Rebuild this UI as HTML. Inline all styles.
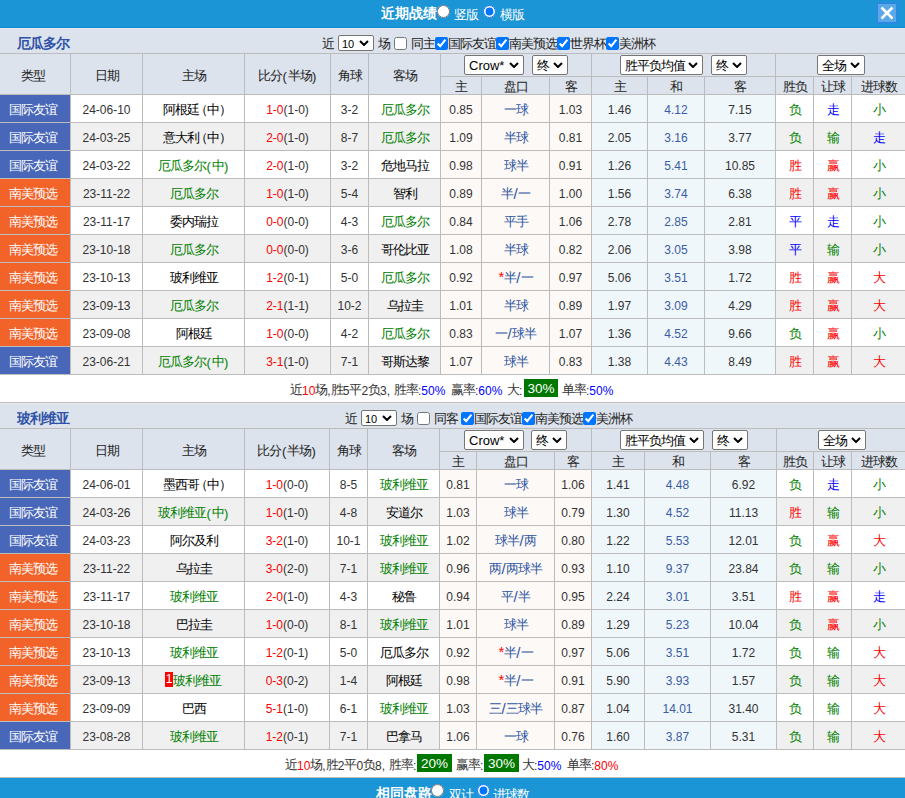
<!DOCTYPE html>
<html><head><meta charset="utf-8"><title>近期战绩</title><style>
html,body{margin:0;padding:0;}
body{width:905px;height:798px;overflow:hidden;position:relative;background:#fff;font-family:"Liberation Sans",sans-serif;font-size:12px;color:#333;}
body>div,body>select,body>input{position:absolute;box-sizing:border-box;}
.t{text-align:center;white-space:nowrap;overflow:hidden;}
.o{color:#222;font-size:12px;line-height:14px;white-space:nowrap;}
.s{margin:0;padding:0 0 0 2px;font-family:"Liberation Sans",sans-serif;font-size:13px;color:#000;background:#fff;border:1px solid #767676;border-radius:3px;}
.c{margin:0;width:13px;height:13px;}
.k{font-size:13px;letter-spacing:-1px;position:relative;top:-1px;font-weight:500;}
.ast{color:#f00;font-size:15px;line-height:0;position:relative;top:-1px;}
.sl{font-size:15px;line-height:0;}
.pl{margin-left:-3.5px;}
.pr{margin-right:-6.5px;}
.pa{font-size:13px;margin:0 0.6px;}
.k2{font-size:13px;letter-spacing:-1px;font-weight:500;}
.sel{background:#fff;border:1px solid #767676;border-radius:2px;color:#000;}
.r{margin:0;width:13px;height:13px;}
.tt{color:#fff;font-weight:bold;font-size:14px;white-space:nowrap;}
.tw{color:#fff;font-size:13px;letter-spacing:-1px;white-space:nowrap;}
.gb{background:#007800;color:#fff;text-align:center;line-height:18px;height:18px;font-size:13.5px;}
.sm{white-space:nowrap;line-height:14px;font-size:12px;}
.red1{display:inline-block;background:#f00;color:#fff;width:8px;height:15px;line-height:15px;font-size:12px;vertical-align:top;position:relative;top:4px;text-align:center;margin-left:-1px;}
</style></head>
<body>
<div style="left:0px;top:0px;width:905px;height:27px;background:#1b95d6;"></div>
<div style="left:0px;top:27px;width:905px;height:1px;background:#0e8bd1;"></div>
<div class="tt" style="left:381px;top:0px;height:27px;line-height:27px">近期战绩</div>
<input type="radio" class="r" name="v" style="left:437px;top:5px">
<div class="tw" style="left:454px;top:1px;height:27px;line-height:27px">竖版</div>
<input type="radio" class="r" name="v" checked style="left:483px;top:5px">
<div class="tw" style="left:500px;top:1px;height:27px;line-height:27px">横版</div>
<div style="left:876px;top:2px;width:22px;height:22px;border:2px solid #2a89e0;background:#5aa8e8"></div>
<svg style="position:absolute;left:876px;top:2px" width="22" height="22" viewBox="0 0 22 22"><path d="M5.5 5.5 L16.5 16.5 M16.5 5.5 L5.5 16.5" stroke="#fff" stroke-width="2.5" stroke-linecap="butt"/></svg>
<div style="left:0px;top:28px;width:905px;height:1px;background:#e6e9ee;"></div>
<div style="left:0px;top:29px;width:905px;height:24px;background:#dce3ec;"></div>
<div style="left:0px;top:53px;width:905px;height:1px;background:#bcbcbc;"></div>
<div class="t" style="left:17px;top:31px;width:80px;height:24px;line-height:24px;color:#2f52a8;font-weight:bold;font-size:14px;letter-spacing:-1px;text-align:left">厄瓜多尔</div>
<div class="o" style="left:322px;top:38px"><span class="k">近</span></div>
<div class="sel" style="left:338px;top:35px;width:36px;height:16px"><span style="position:absolute;left:3px;top:1px;line-height:14px;font-size:11px">10</span><svg style="position:absolute;left:20px;top:4px" width="10" height="6" viewBox="0 0 10 6"><path d="M1 1 L5 5 L9 1" fill="none" stroke="#000" stroke-width="2"/></svg></div>
<div class="o" style="left:378px;top:38px"><span class="k">场</span></div>
<input type="checkbox" class="c" style="left:394px;top:37px">
<div class="o" style="left:411px;top:38px"><span class="k">同主</span></div>
<input type="checkbox" class="c" checked style="left:435px;top:37px">
<div class="o" style="left:448px;top:38px"><span class="k">国际友谊</span></div>
<input type="checkbox" class="c" checked style="left:496px;top:37px">
<div class="o" style="left:509px;top:38px"><span class="k">南美预选</span></div>
<input type="checkbox" class="c" checked style="left:557px;top:37px">
<div class="o" style="left:570px;top:38px"><span class="k">世界杯</span></div>
<input type="checkbox" class="c" checked style="left:606px;top:37px">
<div class="o" style="left:619px;top:38px"><span class="k">美洲杯</span></div>
<div style="left:0px;top:54px;width:905px;height:40px;background:#dce3ec;"></div>
<div style="left:441px;top:76px;width:464px;height:1px;background:#bcbcbc;"></div>
<div style="left:0px;top:94px;width:905px;height:1px;background:#bcbcbc;"></div>
<div style="left:70px;top:54px;width:1px;height:40px;background:#bcbcbc;"></div>
<div style="left:142px;top:54px;width:1px;height:40px;background:#bcbcbc;"></div>
<div style="left:244px;top:54px;width:1px;height:40px;background:#bcbcbc;"></div>
<div style="left:330px;top:54px;width:1px;height:40px;background:#bcbcbc;"></div>
<div style="left:368px;top:54px;width:1px;height:40px;background:#bcbcbc;"></div>
<div style="left:440px;top:54px;width:1px;height:40px;background:#bcbcbc;"></div>
<div style="left:440px;top:54px;width:1px;height:22px;background:#bcbcbc;"></div>
<div style="left:591px;top:54px;width:1px;height:22px;background:#bcbcbc;"></div>
<div style="left:775px;top:54px;width:1px;height:22px;background:#bcbcbc;"></div>
<div style="left:440px;top:77px;width:1px;height:17px;background:#bcbcbc;"></div>
<div style="left:481px;top:77px;width:1px;height:17px;background:#bcbcbc;"></div>
<div style="left:549px;top:77px;width:1px;height:17px;background:#bcbcbc;"></div>
<div style="left:591px;top:77px;width:1px;height:17px;background:#bcbcbc;"></div>
<div style="left:647px;top:77px;width:1px;height:17px;background:#bcbcbc;"></div>
<div style="left:704px;top:77px;width:1px;height:17px;background:#bcbcbc;"></div>
<div style="left:775px;top:77px;width:1px;height:17px;background:#bcbcbc;"></div>
<div style="left:813px;top:77px;width:1px;height:17px;background:#bcbcbc;"></div>
<div style="left:851px;top:77px;width:1px;height:17px;background:#bcbcbc;"></div>
<div class="t" style="left:-2px;top:57px;width:70px;height:40px;line-height:40px;color:#222"><span class="k">类型</span></div>
<div class="t" style="left:71px;top:57px;width:71px;height:40px;line-height:40px;color:#222"><span class="k">日期</span></div>
<div class="t" style="left:143px;top:57px;width:101px;height:40px;line-height:40px;color:#222"><span class="k">主场</span></div>
<div class="t" style="left:245px;top:57px;width:85px;height:40px;line-height:40px;color:#222"><span class="k">比分</span><span class="pa">(</span><span class="k">半场</span><span class="pa">)</span></div>
<div class="t" style="left:331px;top:57px;width:37px;height:40px;line-height:40px;color:#222"><span class="k">角球</span></div>
<div class="t" style="left:369px;top:57px;width:71px;height:40px;line-height:40px;color:#222"><span class="k">客场</span></div>
<div class="t" style="left:441px;top:79px;width:40px;height:17px;line-height:17px;color:#222"><span class="k">主</span></div>
<div class="t" style="left:482px;top:79px;width:67px;height:17px;line-height:17px;color:#222"><span class="k">盘口</span></div>
<div class="t" style="left:550px;top:79px;width:41px;height:17px;line-height:17px;color:#222"><span class="k">客</span></div>
<div class="t" style="left:592px;top:79px;width:55px;height:17px;line-height:17px;color:#222"><span class="k">主</span></div>
<div class="t" style="left:648px;top:79px;width:56px;height:17px;line-height:17px;color:#222"><span class="k">和</span></div>
<div class="t" style="left:705px;top:79px;width:70px;height:17px;line-height:17px;color:#222"><span class="k">客</span></div>
<div class="t" style="left:776px;top:79px;width:37px;height:17px;line-height:17px;color:#222"><span class="k">胜负</span></div>
<div class="t" style="left:814px;top:79px;width:37px;height:17px;line-height:17px;color:#222"><span class="k">让球</span></div>
<div class="t" style="left:852px;top:79px;width:53px;height:17px;line-height:17px;color:#222"><span class="k">进球数</span></div>
<div class="sel" style="left:464px;top:55px;width:60px;height:20px"><span style="position:absolute;left:4px;top:1px;line-height:18px;font-size:13px">Crow*</span><svg style="position:absolute;left:44px;top:6px" width="10" height="6" viewBox="0 0 10 6"><path d="M1 1 L5 5 L9 1" fill="none" stroke="#000" stroke-width="2"/></svg></div>
<div class="sel" style="left:532px;top:55px;width:36px;height:20px"><span style="position:absolute;left:4px;top:1px;line-height:18px;font-size:13px"><span class="k2">终</span></span><svg style="position:absolute;left:20px;top:6px" width="10" height="6" viewBox="0 0 10 6"><path d="M1 1 L5 5 L9 1" fill="none" stroke="#000" stroke-width="2"/></svg></div>
<div class="sel" style="left:620px;top:55px;width:83px;height:20px"><span style="position:absolute;left:4px;top:1px;line-height:18px;font-size:13px"><span class="k2">胜平负均值</span></span><svg style="position:absolute;left:67px;top:6px" width="10" height="6" viewBox="0 0 10 6"><path d="M1 1 L5 5 L9 1" fill="none" stroke="#000" stroke-width="2"/></svg></div>
<div class="sel" style="left:711px;top:55px;width:36px;height:20px"><span style="position:absolute;left:4px;top:1px;line-height:18px;font-size:13px"><span class="k2">终</span></span><svg style="position:absolute;left:20px;top:6px" width="10" height="6" viewBox="0 0 10 6"><path d="M1 1 L5 5 L9 1" fill="none" stroke="#000" stroke-width="2"/></svg></div>
<div class="sel" style="left:817px;top:55px;width:48px;height:20px"><span style="position:absolute;left:4px;top:1px;line-height:18px;font-size:13px"><span class="k2">全场</span></span><svg style="position:absolute;left:32px;top:6px" width="10" height="6" viewBox="0 0 10 6"><path d="M1 1 L5 5 L9 1" fill="none" stroke="#000" stroke-width="2"/></svg></div>
<div style="left:0px;top:95px;width:70px;height:27px;background:#4867b8;"></div>
<div class="t" style="left:-2px;top:97px;width:70px;height:27px;line-height:27px;"><span style="color:#fff"><span class="k">国际友谊</span></span></div>
<div style="left:71px;top:95px;width:71px;height:27px;background:#ffffff;"></div>
<div class="t" style="left:71px;top:97px;width:71px;height:27px;line-height:27px;"><span style="color:#333333">24-06-10</span></div>
<div style="left:143px;top:95px;width:101px;height:27px;background:#ffffff;"></div>
<div class="t" style="left:143px;top:97px;width:101px;height:27px;line-height:27px;"><span style="color:#000"><span class="k">阿根廷<span class="pl">（</span>中<span class="pr">）</span></span></span></div>
<div style="left:245px;top:95px;width:85px;height:27px;background:#ffffff;"></div>
<div class="t" style="left:245px;top:97px;width:85px;height:27px;line-height:27px;"><span style="color:#ff0000">1-0</span><span style="color:#333333">(1-0)</span></div>
<div style="left:331px;top:95px;width:37px;height:27px;background:#ffffff;"></div>
<div class="t" style="left:331px;top:97px;width:37px;height:27px;line-height:27px;"><span style="color:#333333">3-2</span></div>
<div style="left:369px;top:95px;width:71px;height:27px;background:#ffffff;"></div>
<div class="t" style="left:369px;top:97px;width:71px;height:27px;line-height:27px;"><span style="color:#008000"><span class="k">厄瓜多尔</span></span></div>
<div style="left:441px;top:95px;width:40px;height:27px;background:#fdf9f6;"></div>
<div class="t" style="left:441px;top:97px;width:40px;height:27px;line-height:27px;"><span style="color:#333333">0.85</span></div>
<div style="left:482px;top:95px;width:67px;height:27px;background:#fdf9f6;"></div>
<div class="t" style="left:482px;top:97px;width:67px;height:27px;line-height:27px;"><span style="color:#2d55a3"><span class="k">一球</span></span></div>
<div style="left:550px;top:95px;width:41px;height:27px;background:#fdf9f6;"></div>
<div class="t" style="left:550px;top:97px;width:41px;height:27px;line-height:27px;"><span style="color:#333333">1.03</span></div>
<div style="left:592px;top:95px;width:55px;height:27px;background:#f0f7fb;"></div>
<div class="t" style="left:592px;top:97px;width:55px;height:27px;line-height:27px;"><span style="color:#333333">1.46</span></div>
<div style="left:648px;top:95px;width:56px;height:27px;background:#f0f7fb;"></div>
<div class="t" style="left:648px;top:97px;width:56px;height:27px;line-height:27px;"><span style="color:#3a5ca6">4.12</span></div>
<div style="left:705px;top:95px;width:70px;height:27px;background:#f0f7fb;"></div>
<div class="t" style="left:705px;top:97px;width:70px;height:27px;line-height:27px;"><span style="color:#333333">7.15</span></div>
<div style="left:776px;top:95px;width:37px;height:27px;background:#ffffff;"></div>
<div class="t" style="left:776px;top:97px;width:37px;height:27px;line-height:27px;"><span style="color:#008000"><span class="k">负</span></span></div>
<div style="left:814px;top:95px;width:37px;height:27px;background:#ffffff;"></div>
<div class="t" style="left:814px;top:97px;width:37px;height:27px;line-height:27px;"><span style="color:#0000ff"><span class="k">走</span></span></div>
<div style="left:852px;top:95px;width:53px;height:27px;background:#ffffff;"></div>
<div class="t" style="left:852px;top:97px;width:53px;height:27px;line-height:27px;"><span style="color:#008000"><span class="k">小</span></span></div>
<div style="left:0px;top:122px;width:905px;height:1px;background:#bcbcbc;"></div>
<div style="left:70px;top:95px;width:1px;height:27px;background:#bcbcbc;"></div>
<div style="left:142px;top:95px;width:1px;height:27px;background:#bcbcbc;"></div>
<div style="left:244px;top:95px;width:1px;height:27px;background:#bcbcbc;"></div>
<div style="left:330px;top:95px;width:1px;height:27px;background:#bcbcbc;"></div>
<div style="left:368px;top:95px;width:1px;height:27px;background:#bcbcbc;"></div>
<div style="left:440px;top:95px;width:1px;height:27px;background:#bcbcbc;"></div>
<div style="left:481px;top:95px;width:1px;height:27px;background:#bcbcbc;"></div>
<div style="left:549px;top:95px;width:1px;height:27px;background:#bcbcbc;"></div>
<div style="left:591px;top:95px;width:1px;height:27px;background:#bcbcbc;"></div>
<div style="left:647px;top:95px;width:1px;height:27px;background:#bcbcbc;"></div>
<div style="left:704px;top:95px;width:1px;height:27px;background:#bcbcbc;"></div>
<div style="left:775px;top:95px;width:1px;height:27px;background:#bcbcbc;"></div>
<div style="left:813px;top:95px;width:1px;height:27px;background:#bcbcbc;"></div>
<div style="left:851px;top:95px;width:1px;height:27px;background:#bcbcbc;"></div>
<div style="left:0px;top:123px;width:70px;height:27px;background:#4867b8;"></div>
<div class="t" style="left:-2px;top:125px;width:70px;height:27px;line-height:27px;"><span style="color:#fff"><span class="k">国际友谊</span></span></div>
<div style="left:71px;top:123px;width:71px;height:27px;background:#f0f0f0;"></div>
<div class="t" style="left:71px;top:125px;width:71px;height:27px;line-height:27px;"><span style="color:#333333">24-03-25</span></div>
<div style="left:143px;top:123px;width:101px;height:27px;background:#f0f0f0;"></div>
<div class="t" style="left:143px;top:125px;width:101px;height:27px;line-height:27px;"><span style="color:#000"><span class="k">意大利<span class="pl">（</span>中<span class="pr">）</span></span></span></div>
<div style="left:245px;top:123px;width:85px;height:27px;background:#f0f0f0;"></div>
<div class="t" style="left:245px;top:125px;width:85px;height:27px;line-height:27px;"><span style="color:#ff0000">2-0</span><span style="color:#333333">(1-0)</span></div>
<div style="left:331px;top:123px;width:37px;height:27px;background:#f0f0f0;"></div>
<div class="t" style="left:331px;top:125px;width:37px;height:27px;line-height:27px;"><span style="color:#333333">8-7</span></div>
<div style="left:369px;top:123px;width:71px;height:27px;background:#f0f0f0;"></div>
<div class="t" style="left:369px;top:125px;width:71px;height:27px;line-height:27px;"><span style="color:#008000"><span class="k">厄瓜多尔</span></span></div>
<div style="left:441px;top:123px;width:40px;height:27px;background:#fdf9f6;"></div>
<div class="t" style="left:441px;top:125px;width:40px;height:27px;line-height:27px;"><span style="color:#333333">1.09</span></div>
<div style="left:482px;top:123px;width:67px;height:27px;background:#fdf9f6;"></div>
<div class="t" style="left:482px;top:125px;width:67px;height:27px;line-height:27px;"><span style="color:#2d55a3"><span class="k">半球</span></span></div>
<div style="left:550px;top:123px;width:41px;height:27px;background:#fdf9f6;"></div>
<div class="t" style="left:550px;top:125px;width:41px;height:27px;line-height:27px;"><span style="color:#333333">0.81</span></div>
<div style="left:592px;top:123px;width:55px;height:27px;background:#f0f7fb;"></div>
<div class="t" style="left:592px;top:125px;width:55px;height:27px;line-height:27px;"><span style="color:#333333">2.05</span></div>
<div style="left:648px;top:123px;width:56px;height:27px;background:#f0f7fb;"></div>
<div class="t" style="left:648px;top:125px;width:56px;height:27px;line-height:27px;"><span style="color:#3a5ca6">3.16</span></div>
<div style="left:705px;top:123px;width:70px;height:27px;background:#f0f7fb;"></div>
<div class="t" style="left:705px;top:125px;width:70px;height:27px;line-height:27px;"><span style="color:#333333">3.77</span></div>
<div style="left:776px;top:123px;width:37px;height:27px;background:#f0f0f0;"></div>
<div class="t" style="left:776px;top:125px;width:37px;height:27px;line-height:27px;"><span style="color:#008000"><span class="k">负</span></span></div>
<div style="left:814px;top:123px;width:37px;height:27px;background:#f0f0f0;"></div>
<div class="t" style="left:814px;top:125px;width:37px;height:27px;line-height:27px;"><span style="color:#008000"><span class="k">输</span></span></div>
<div style="left:852px;top:123px;width:53px;height:27px;background:#f0f0f0;"></div>
<div class="t" style="left:852px;top:125px;width:53px;height:27px;line-height:27px;"><span style="color:#0000ff"><span class="k">走</span></span></div>
<div style="left:0px;top:150px;width:905px;height:1px;background:#bcbcbc;"></div>
<div style="left:70px;top:123px;width:1px;height:27px;background:#bcbcbc;"></div>
<div style="left:142px;top:123px;width:1px;height:27px;background:#bcbcbc;"></div>
<div style="left:244px;top:123px;width:1px;height:27px;background:#bcbcbc;"></div>
<div style="left:330px;top:123px;width:1px;height:27px;background:#bcbcbc;"></div>
<div style="left:368px;top:123px;width:1px;height:27px;background:#bcbcbc;"></div>
<div style="left:440px;top:123px;width:1px;height:27px;background:#bcbcbc;"></div>
<div style="left:481px;top:123px;width:1px;height:27px;background:#bcbcbc;"></div>
<div style="left:549px;top:123px;width:1px;height:27px;background:#bcbcbc;"></div>
<div style="left:591px;top:123px;width:1px;height:27px;background:#bcbcbc;"></div>
<div style="left:647px;top:123px;width:1px;height:27px;background:#bcbcbc;"></div>
<div style="left:704px;top:123px;width:1px;height:27px;background:#bcbcbc;"></div>
<div style="left:775px;top:123px;width:1px;height:27px;background:#bcbcbc;"></div>
<div style="left:813px;top:123px;width:1px;height:27px;background:#bcbcbc;"></div>
<div style="left:851px;top:123px;width:1px;height:27px;background:#bcbcbc;"></div>
<div style="left:0px;top:151px;width:70px;height:27px;background:#4867b8;"></div>
<div class="t" style="left:-2px;top:153px;width:70px;height:27px;line-height:27px;"><span style="color:#fff"><span class="k">国际友谊</span></span></div>
<div style="left:71px;top:151px;width:71px;height:27px;background:#ffffff;"></div>
<div class="t" style="left:71px;top:153px;width:71px;height:27px;line-height:27px;"><span style="color:#333333">24-03-22</span></div>
<div style="left:143px;top:151px;width:101px;height:27px;background:#ffffff;"></div>
<div class="t" style="left:143px;top:153px;width:101px;height:27px;line-height:27px;"><span style="color:#008000"><span class="k">厄瓜多尔</span><span class="pa">(</span><span class="k">中</span><span class="pa">)</span></span></div>
<div style="left:245px;top:151px;width:85px;height:27px;background:#ffffff;"></div>
<div class="t" style="left:245px;top:153px;width:85px;height:27px;line-height:27px;"><span style="color:#ff0000">2-0</span><span style="color:#333333">(1-0)</span></div>
<div style="left:331px;top:151px;width:37px;height:27px;background:#ffffff;"></div>
<div class="t" style="left:331px;top:153px;width:37px;height:27px;line-height:27px;"><span style="color:#333333">3-2</span></div>
<div style="left:369px;top:151px;width:71px;height:27px;background:#ffffff;"></div>
<div class="t" style="left:369px;top:153px;width:71px;height:27px;line-height:27px;"><span style="color:#000"><span class="k">危地马拉</span></span></div>
<div style="left:441px;top:151px;width:40px;height:27px;background:#fdf9f6;"></div>
<div class="t" style="left:441px;top:153px;width:40px;height:27px;line-height:27px;"><span style="color:#333333">0.98</span></div>
<div style="left:482px;top:151px;width:67px;height:27px;background:#fdf9f6;"></div>
<div class="t" style="left:482px;top:153px;width:67px;height:27px;line-height:27px;"><span style="color:#2d55a3"><span class="k">球半</span></span></div>
<div style="left:550px;top:151px;width:41px;height:27px;background:#fdf9f6;"></div>
<div class="t" style="left:550px;top:153px;width:41px;height:27px;line-height:27px;"><span style="color:#333333">0.91</span></div>
<div style="left:592px;top:151px;width:55px;height:27px;background:#f0f7fb;"></div>
<div class="t" style="left:592px;top:153px;width:55px;height:27px;line-height:27px;"><span style="color:#333333">1.26</span></div>
<div style="left:648px;top:151px;width:56px;height:27px;background:#f0f7fb;"></div>
<div class="t" style="left:648px;top:153px;width:56px;height:27px;line-height:27px;"><span style="color:#3a5ca6">5.41</span></div>
<div style="left:705px;top:151px;width:70px;height:27px;background:#f0f7fb;"></div>
<div class="t" style="left:705px;top:153px;width:70px;height:27px;line-height:27px;"><span style="color:#333333">10.85</span></div>
<div style="left:776px;top:151px;width:37px;height:27px;background:#ffffff;"></div>
<div class="t" style="left:776px;top:153px;width:37px;height:27px;line-height:27px;"><span style="color:#ff0000"><span class="k">胜</span></span></div>
<div style="left:814px;top:151px;width:37px;height:27px;background:#ffffff;"></div>
<div class="t" style="left:814px;top:153px;width:37px;height:27px;line-height:27px;"><span style="color:#ff0000"><span class="k">赢</span></span></div>
<div style="left:852px;top:151px;width:53px;height:27px;background:#ffffff;"></div>
<div class="t" style="left:852px;top:153px;width:53px;height:27px;line-height:27px;"><span style="color:#008000"><span class="k">小</span></span></div>
<div style="left:0px;top:178px;width:905px;height:1px;background:#bcbcbc;"></div>
<div style="left:70px;top:151px;width:1px;height:27px;background:#bcbcbc;"></div>
<div style="left:142px;top:151px;width:1px;height:27px;background:#bcbcbc;"></div>
<div style="left:244px;top:151px;width:1px;height:27px;background:#bcbcbc;"></div>
<div style="left:330px;top:151px;width:1px;height:27px;background:#bcbcbc;"></div>
<div style="left:368px;top:151px;width:1px;height:27px;background:#bcbcbc;"></div>
<div style="left:440px;top:151px;width:1px;height:27px;background:#bcbcbc;"></div>
<div style="left:481px;top:151px;width:1px;height:27px;background:#bcbcbc;"></div>
<div style="left:549px;top:151px;width:1px;height:27px;background:#bcbcbc;"></div>
<div style="left:591px;top:151px;width:1px;height:27px;background:#bcbcbc;"></div>
<div style="left:647px;top:151px;width:1px;height:27px;background:#bcbcbc;"></div>
<div style="left:704px;top:151px;width:1px;height:27px;background:#bcbcbc;"></div>
<div style="left:775px;top:151px;width:1px;height:27px;background:#bcbcbc;"></div>
<div style="left:813px;top:151px;width:1px;height:27px;background:#bcbcbc;"></div>
<div style="left:851px;top:151px;width:1px;height:27px;background:#bcbcbc;"></div>
<div style="left:0px;top:179px;width:70px;height:27px;background:#f26329;"></div>
<div class="t" style="left:-2px;top:181px;width:70px;height:27px;line-height:27px;"><span style="color:#fff"><span class="k">南美预选</span></span></div>
<div style="left:71px;top:179px;width:71px;height:27px;background:#f0f0f0;"></div>
<div class="t" style="left:71px;top:181px;width:71px;height:27px;line-height:27px;"><span style="color:#333333">23-11-22</span></div>
<div style="left:143px;top:179px;width:101px;height:27px;background:#f0f0f0;"></div>
<div class="t" style="left:143px;top:181px;width:101px;height:27px;line-height:27px;"><span style="color:#008000"><span class="k">厄瓜多尔</span></span></div>
<div style="left:245px;top:179px;width:85px;height:27px;background:#f0f0f0;"></div>
<div class="t" style="left:245px;top:181px;width:85px;height:27px;line-height:27px;"><span style="color:#ff0000">1-0</span><span style="color:#333333">(1-0)</span></div>
<div style="left:331px;top:179px;width:37px;height:27px;background:#f0f0f0;"></div>
<div class="t" style="left:331px;top:181px;width:37px;height:27px;line-height:27px;"><span style="color:#333333">5-4</span></div>
<div style="left:369px;top:179px;width:71px;height:27px;background:#f0f0f0;"></div>
<div class="t" style="left:369px;top:181px;width:71px;height:27px;line-height:27px;"><span style="color:#000"><span class="k">智利</span></span></div>
<div style="left:441px;top:179px;width:40px;height:27px;background:#fdf9f6;"></div>
<div class="t" style="left:441px;top:181px;width:40px;height:27px;line-height:27px;"><span style="color:#333333">0.89</span></div>
<div style="left:482px;top:179px;width:67px;height:27px;background:#fdf9f6;"></div>
<div class="t" style="left:482px;top:181px;width:67px;height:27px;line-height:27px;"><span style="color:#2d55a3"><span class="k">半</span><span class="sl">/</span><span class="k">一</span></span></div>
<div style="left:550px;top:179px;width:41px;height:27px;background:#fdf9f6;"></div>
<div class="t" style="left:550px;top:181px;width:41px;height:27px;line-height:27px;"><span style="color:#333333">1.00</span></div>
<div style="left:592px;top:179px;width:55px;height:27px;background:#f0f7fb;"></div>
<div class="t" style="left:592px;top:181px;width:55px;height:27px;line-height:27px;"><span style="color:#333333">1.56</span></div>
<div style="left:648px;top:179px;width:56px;height:27px;background:#f0f7fb;"></div>
<div class="t" style="left:648px;top:181px;width:56px;height:27px;line-height:27px;"><span style="color:#3a5ca6">3.74</span></div>
<div style="left:705px;top:179px;width:70px;height:27px;background:#f0f7fb;"></div>
<div class="t" style="left:705px;top:181px;width:70px;height:27px;line-height:27px;"><span style="color:#333333">6.38</span></div>
<div style="left:776px;top:179px;width:37px;height:27px;background:#f0f0f0;"></div>
<div class="t" style="left:776px;top:181px;width:37px;height:27px;line-height:27px;"><span style="color:#ff0000"><span class="k">胜</span></span></div>
<div style="left:814px;top:179px;width:37px;height:27px;background:#f0f0f0;"></div>
<div class="t" style="left:814px;top:181px;width:37px;height:27px;line-height:27px;"><span style="color:#ff0000"><span class="k">赢</span></span></div>
<div style="left:852px;top:179px;width:53px;height:27px;background:#f0f0f0;"></div>
<div class="t" style="left:852px;top:181px;width:53px;height:27px;line-height:27px;"><span style="color:#008000"><span class="k">小</span></span></div>
<div style="left:0px;top:206px;width:905px;height:1px;background:#bcbcbc;"></div>
<div style="left:70px;top:179px;width:1px;height:27px;background:#bcbcbc;"></div>
<div style="left:142px;top:179px;width:1px;height:27px;background:#bcbcbc;"></div>
<div style="left:244px;top:179px;width:1px;height:27px;background:#bcbcbc;"></div>
<div style="left:330px;top:179px;width:1px;height:27px;background:#bcbcbc;"></div>
<div style="left:368px;top:179px;width:1px;height:27px;background:#bcbcbc;"></div>
<div style="left:440px;top:179px;width:1px;height:27px;background:#bcbcbc;"></div>
<div style="left:481px;top:179px;width:1px;height:27px;background:#bcbcbc;"></div>
<div style="left:549px;top:179px;width:1px;height:27px;background:#bcbcbc;"></div>
<div style="left:591px;top:179px;width:1px;height:27px;background:#bcbcbc;"></div>
<div style="left:647px;top:179px;width:1px;height:27px;background:#bcbcbc;"></div>
<div style="left:704px;top:179px;width:1px;height:27px;background:#bcbcbc;"></div>
<div style="left:775px;top:179px;width:1px;height:27px;background:#bcbcbc;"></div>
<div style="left:813px;top:179px;width:1px;height:27px;background:#bcbcbc;"></div>
<div style="left:851px;top:179px;width:1px;height:27px;background:#bcbcbc;"></div>
<div style="left:0px;top:207px;width:70px;height:27px;background:#f26329;"></div>
<div class="t" style="left:-2px;top:209px;width:70px;height:27px;line-height:27px;"><span style="color:#fff"><span class="k">南美预选</span></span></div>
<div style="left:71px;top:207px;width:71px;height:27px;background:#ffffff;"></div>
<div class="t" style="left:71px;top:209px;width:71px;height:27px;line-height:27px;"><span style="color:#333333">23-11-17</span></div>
<div style="left:143px;top:207px;width:101px;height:27px;background:#ffffff;"></div>
<div class="t" style="left:143px;top:209px;width:101px;height:27px;line-height:27px;"><span style="color:#000"><span class="k">委内瑞拉</span></span></div>
<div style="left:245px;top:207px;width:85px;height:27px;background:#ffffff;"></div>
<div class="t" style="left:245px;top:209px;width:85px;height:27px;line-height:27px;"><span style="color:#ff0000">0-0</span><span style="color:#333333">(0-0)</span></div>
<div style="left:331px;top:207px;width:37px;height:27px;background:#ffffff;"></div>
<div class="t" style="left:331px;top:209px;width:37px;height:27px;line-height:27px;"><span style="color:#333333">4-3</span></div>
<div style="left:369px;top:207px;width:71px;height:27px;background:#ffffff;"></div>
<div class="t" style="left:369px;top:209px;width:71px;height:27px;line-height:27px;"><span style="color:#008000"><span class="k">厄瓜多尔</span></span></div>
<div style="left:441px;top:207px;width:40px;height:27px;background:#fdf9f6;"></div>
<div class="t" style="left:441px;top:209px;width:40px;height:27px;line-height:27px;"><span style="color:#333333">0.84</span></div>
<div style="left:482px;top:207px;width:67px;height:27px;background:#fdf9f6;"></div>
<div class="t" style="left:482px;top:209px;width:67px;height:27px;line-height:27px;"><span style="color:#2d55a3"><span class="k">平手</span></span></div>
<div style="left:550px;top:207px;width:41px;height:27px;background:#fdf9f6;"></div>
<div class="t" style="left:550px;top:209px;width:41px;height:27px;line-height:27px;"><span style="color:#333333">1.06</span></div>
<div style="left:592px;top:207px;width:55px;height:27px;background:#f0f7fb;"></div>
<div class="t" style="left:592px;top:209px;width:55px;height:27px;line-height:27px;"><span style="color:#333333">2.78</span></div>
<div style="left:648px;top:207px;width:56px;height:27px;background:#f0f7fb;"></div>
<div class="t" style="left:648px;top:209px;width:56px;height:27px;line-height:27px;"><span style="color:#3a5ca6">2.85</span></div>
<div style="left:705px;top:207px;width:70px;height:27px;background:#f0f7fb;"></div>
<div class="t" style="left:705px;top:209px;width:70px;height:27px;line-height:27px;"><span style="color:#333333">2.81</span></div>
<div style="left:776px;top:207px;width:37px;height:27px;background:#ffffff;"></div>
<div class="t" style="left:776px;top:209px;width:37px;height:27px;line-height:27px;"><span style="color:#0000ff"><span class="k">平</span></span></div>
<div style="left:814px;top:207px;width:37px;height:27px;background:#ffffff;"></div>
<div class="t" style="left:814px;top:209px;width:37px;height:27px;line-height:27px;"><span style="color:#0000ff"><span class="k">走</span></span></div>
<div style="left:852px;top:207px;width:53px;height:27px;background:#ffffff;"></div>
<div class="t" style="left:852px;top:209px;width:53px;height:27px;line-height:27px;"><span style="color:#008000"><span class="k">小</span></span></div>
<div style="left:0px;top:234px;width:905px;height:1px;background:#bcbcbc;"></div>
<div style="left:70px;top:207px;width:1px;height:27px;background:#bcbcbc;"></div>
<div style="left:142px;top:207px;width:1px;height:27px;background:#bcbcbc;"></div>
<div style="left:244px;top:207px;width:1px;height:27px;background:#bcbcbc;"></div>
<div style="left:330px;top:207px;width:1px;height:27px;background:#bcbcbc;"></div>
<div style="left:368px;top:207px;width:1px;height:27px;background:#bcbcbc;"></div>
<div style="left:440px;top:207px;width:1px;height:27px;background:#bcbcbc;"></div>
<div style="left:481px;top:207px;width:1px;height:27px;background:#bcbcbc;"></div>
<div style="left:549px;top:207px;width:1px;height:27px;background:#bcbcbc;"></div>
<div style="left:591px;top:207px;width:1px;height:27px;background:#bcbcbc;"></div>
<div style="left:647px;top:207px;width:1px;height:27px;background:#bcbcbc;"></div>
<div style="left:704px;top:207px;width:1px;height:27px;background:#bcbcbc;"></div>
<div style="left:775px;top:207px;width:1px;height:27px;background:#bcbcbc;"></div>
<div style="left:813px;top:207px;width:1px;height:27px;background:#bcbcbc;"></div>
<div style="left:851px;top:207px;width:1px;height:27px;background:#bcbcbc;"></div>
<div style="left:0px;top:235px;width:70px;height:27px;background:#f26329;"></div>
<div class="t" style="left:-2px;top:237px;width:70px;height:27px;line-height:27px;"><span style="color:#fff"><span class="k">南美预选</span></span></div>
<div style="left:71px;top:235px;width:71px;height:27px;background:#f0f0f0;"></div>
<div class="t" style="left:71px;top:237px;width:71px;height:27px;line-height:27px;"><span style="color:#333333">23-10-18</span></div>
<div style="left:143px;top:235px;width:101px;height:27px;background:#f0f0f0;"></div>
<div class="t" style="left:143px;top:237px;width:101px;height:27px;line-height:27px;"><span style="color:#008000"><span class="k">厄瓜多尔</span></span></div>
<div style="left:245px;top:235px;width:85px;height:27px;background:#f0f0f0;"></div>
<div class="t" style="left:245px;top:237px;width:85px;height:27px;line-height:27px;"><span style="color:#ff0000">0-0</span><span style="color:#333333">(0-0)</span></div>
<div style="left:331px;top:235px;width:37px;height:27px;background:#f0f0f0;"></div>
<div class="t" style="left:331px;top:237px;width:37px;height:27px;line-height:27px;"><span style="color:#333333">3-6</span></div>
<div style="left:369px;top:235px;width:71px;height:27px;background:#f0f0f0;"></div>
<div class="t" style="left:369px;top:237px;width:71px;height:27px;line-height:27px;"><span style="color:#000"><span class="k">哥伦比亚</span></span></div>
<div style="left:441px;top:235px;width:40px;height:27px;background:#fdf9f6;"></div>
<div class="t" style="left:441px;top:237px;width:40px;height:27px;line-height:27px;"><span style="color:#333333">1.08</span></div>
<div style="left:482px;top:235px;width:67px;height:27px;background:#fdf9f6;"></div>
<div class="t" style="left:482px;top:237px;width:67px;height:27px;line-height:27px;"><span style="color:#2d55a3"><span class="k">半球</span></span></div>
<div style="left:550px;top:235px;width:41px;height:27px;background:#fdf9f6;"></div>
<div class="t" style="left:550px;top:237px;width:41px;height:27px;line-height:27px;"><span style="color:#333333">0.82</span></div>
<div style="left:592px;top:235px;width:55px;height:27px;background:#f0f7fb;"></div>
<div class="t" style="left:592px;top:237px;width:55px;height:27px;line-height:27px;"><span style="color:#333333">2.06</span></div>
<div style="left:648px;top:235px;width:56px;height:27px;background:#f0f7fb;"></div>
<div class="t" style="left:648px;top:237px;width:56px;height:27px;line-height:27px;"><span style="color:#3a5ca6">3.05</span></div>
<div style="left:705px;top:235px;width:70px;height:27px;background:#f0f7fb;"></div>
<div class="t" style="left:705px;top:237px;width:70px;height:27px;line-height:27px;"><span style="color:#333333">3.98</span></div>
<div style="left:776px;top:235px;width:37px;height:27px;background:#f0f0f0;"></div>
<div class="t" style="left:776px;top:237px;width:37px;height:27px;line-height:27px;"><span style="color:#0000ff"><span class="k">平</span></span></div>
<div style="left:814px;top:235px;width:37px;height:27px;background:#f0f0f0;"></div>
<div class="t" style="left:814px;top:237px;width:37px;height:27px;line-height:27px;"><span style="color:#008000"><span class="k">输</span></span></div>
<div style="left:852px;top:235px;width:53px;height:27px;background:#f0f0f0;"></div>
<div class="t" style="left:852px;top:237px;width:53px;height:27px;line-height:27px;"><span style="color:#008000"><span class="k">小</span></span></div>
<div style="left:0px;top:262px;width:905px;height:1px;background:#bcbcbc;"></div>
<div style="left:70px;top:235px;width:1px;height:27px;background:#bcbcbc;"></div>
<div style="left:142px;top:235px;width:1px;height:27px;background:#bcbcbc;"></div>
<div style="left:244px;top:235px;width:1px;height:27px;background:#bcbcbc;"></div>
<div style="left:330px;top:235px;width:1px;height:27px;background:#bcbcbc;"></div>
<div style="left:368px;top:235px;width:1px;height:27px;background:#bcbcbc;"></div>
<div style="left:440px;top:235px;width:1px;height:27px;background:#bcbcbc;"></div>
<div style="left:481px;top:235px;width:1px;height:27px;background:#bcbcbc;"></div>
<div style="left:549px;top:235px;width:1px;height:27px;background:#bcbcbc;"></div>
<div style="left:591px;top:235px;width:1px;height:27px;background:#bcbcbc;"></div>
<div style="left:647px;top:235px;width:1px;height:27px;background:#bcbcbc;"></div>
<div style="left:704px;top:235px;width:1px;height:27px;background:#bcbcbc;"></div>
<div style="left:775px;top:235px;width:1px;height:27px;background:#bcbcbc;"></div>
<div style="left:813px;top:235px;width:1px;height:27px;background:#bcbcbc;"></div>
<div style="left:851px;top:235px;width:1px;height:27px;background:#bcbcbc;"></div>
<div style="left:0px;top:263px;width:70px;height:27px;background:#f26329;"></div>
<div class="t" style="left:-2px;top:265px;width:70px;height:27px;line-height:27px;"><span style="color:#fff"><span class="k">南美预选</span></span></div>
<div style="left:71px;top:263px;width:71px;height:27px;background:#ffffff;"></div>
<div class="t" style="left:71px;top:265px;width:71px;height:27px;line-height:27px;"><span style="color:#333333">23-10-13</span></div>
<div style="left:143px;top:263px;width:101px;height:27px;background:#ffffff;"></div>
<div class="t" style="left:143px;top:265px;width:101px;height:27px;line-height:27px;"><span style="color:#000"><span class="k">玻利维亚</span></span></div>
<div style="left:245px;top:263px;width:85px;height:27px;background:#ffffff;"></div>
<div class="t" style="left:245px;top:265px;width:85px;height:27px;line-height:27px;"><span style="color:#ff0000">1-2</span><span style="color:#333333">(0-1)</span></div>
<div style="left:331px;top:263px;width:37px;height:27px;background:#ffffff;"></div>
<div class="t" style="left:331px;top:265px;width:37px;height:27px;line-height:27px;"><span style="color:#333333">5-0</span></div>
<div style="left:369px;top:263px;width:71px;height:27px;background:#ffffff;"></div>
<div class="t" style="left:369px;top:265px;width:71px;height:27px;line-height:27px;"><span style="color:#008000"><span class="k">厄瓜多尔</span></span></div>
<div style="left:441px;top:263px;width:40px;height:27px;background:#fdf9f6;"></div>
<div class="t" style="left:441px;top:265px;width:40px;height:27px;line-height:27px;"><span style="color:#333333">0.92</span></div>
<div style="left:482px;top:263px;width:67px;height:27px;background:#fdf9f6;"></div>
<div class="t" style="left:482px;top:265px;width:67px;height:27px;line-height:27px;"><span class="ast">*</span><span style="color:#2d55a3"><span class="k">半</span><span class="sl">/</span><span class="k">一</span></span></div>
<div style="left:550px;top:263px;width:41px;height:27px;background:#fdf9f6;"></div>
<div class="t" style="left:550px;top:265px;width:41px;height:27px;line-height:27px;"><span style="color:#333333">0.97</span></div>
<div style="left:592px;top:263px;width:55px;height:27px;background:#f0f7fb;"></div>
<div class="t" style="left:592px;top:265px;width:55px;height:27px;line-height:27px;"><span style="color:#333333">5.06</span></div>
<div style="left:648px;top:263px;width:56px;height:27px;background:#f0f7fb;"></div>
<div class="t" style="left:648px;top:265px;width:56px;height:27px;line-height:27px;"><span style="color:#3a5ca6">3.51</span></div>
<div style="left:705px;top:263px;width:70px;height:27px;background:#f0f7fb;"></div>
<div class="t" style="left:705px;top:265px;width:70px;height:27px;line-height:27px;"><span style="color:#333333">1.72</span></div>
<div style="left:776px;top:263px;width:37px;height:27px;background:#ffffff;"></div>
<div class="t" style="left:776px;top:265px;width:37px;height:27px;line-height:27px;"><span style="color:#ff0000"><span class="k">胜</span></span></div>
<div style="left:814px;top:263px;width:37px;height:27px;background:#ffffff;"></div>
<div class="t" style="left:814px;top:265px;width:37px;height:27px;line-height:27px;"><span style="color:#ff0000"><span class="k">赢</span></span></div>
<div style="left:852px;top:263px;width:53px;height:27px;background:#ffffff;"></div>
<div class="t" style="left:852px;top:265px;width:53px;height:27px;line-height:27px;"><span style="color:#ff0000"><span class="k">大</span></span></div>
<div style="left:0px;top:290px;width:905px;height:1px;background:#bcbcbc;"></div>
<div style="left:70px;top:263px;width:1px;height:27px;background:#bcbcbc;"></div>
<div style="left:142px;top:263px;width:1px;height:27px;background:#bcbcbc;"></div>
<div style="left:244px;top:263px;width:1px;height:27px;background:#bcbcbc;"></div>
<div style="left:330px;top:263px;width:1px;height:27px;background:#bcbcbc;"></div>
<div style="left:368px;top:263px;width:1px;height:27px;background:#bcbcbc;"></div>
<div style="left:440px;top:263px;width:1px;height:27px;background:#bcbcbc;"></div>
<div style="left:481px;top:263px;width:1px;height:27px;background:#bcbcbc;"></div>
<div style="left:549px;top:263px;width:1px;height:27px;background:#bcbcbc;"></div>
<div style="left:591px;top:263px;width:1px;height:27px;background:#bcbcbc;"></div>
<div style="left:647px;top:263px;width:1px;height:27px;background:#bcbcbc;"></div>
<div style="left:704px;top:263px;width:1px;height:27px;background:#bcbcbc;"></div>
<div style="left:775px;top:263px;width:1px;height:27px;background:#bcbcbc;"></div>
<div style="left:813px;top:263px;width:1px;height:27px;background:#bcbcbc;"></div>
<div style="left:851px;top:263px;width:1px;height:27px;background:#bcbcbc;"></div>
<div style="left:0px;top:291px;width:70px;height:27px;background:#f26329;"></div>
<div class="t" style="left:-2px;top:293px;width:70px;height:27px;line-height:27px;"><span style="color:#fff"><span class="k">南美预选</span></span></div>
<div style="left:71px;top:291px;width:71px;height:27px;background:#f0f0f0;"></div>
<div class="t" style="left:71px;top:293px;width:71px;height:27px;line-height:27px;"><span style="color:#333333">23-09-13</span></div>
<div style="left:143px;top:291px;width:101px;height:27px;background:#f0f0f0;"></div>
<div class="t" style="left:143px;top:293px;width:101px;height:27px;line-height:27px;"><span style="color:#008000"><span class="k">厄瓜多尔</span></span></div>
<div style="left:245px;top:291px;width:85px;height:27px;background:#f0f0f0;"></div>
<div class="t" style="left:245px;top:293px;width:85px;height:27px;line-height:27px;"><span style="color:#ff0000">2-1</span><span style="color:#333333">(1-1)</span></div>
<div style="left:331px;top:291px;width:37px;height:27px;background:#f0f0f0;"></div>
<div class="t" style="left:331px;top:293px;width:37px;height:27px;line-height:27px;"><span style="color:#333333">10-2</span></div>
<div style="left:369px;top:291px;width:71px;height:27px;background:#f0f0f0;"></div>
<div class="t" style="left:369px;top:293px;width:71px;height:27px;line-height:27px;"><span style="color:#000"><span class="k">乌拉圭</span></span></div>
<div style="left:441px;top:291px;width:40px;height:27px;background:#fdf9f6;"></div>
<div class="t" style="left:441px;top:293px;width:40px;height:27px;line-height:27px;"><span style="color:#333333">1.01</span></div>
<div style="left:482px;top:291px;width:67px;height:27px;background:#fdf9f6;"></div>
<div class="t" style="left:482px;top:293px;width:67px;height:27px;line-height:27px;"><span style="color:#2d55a3"><span class="k">半球</span></span></div>
<div style="left:550px;top:291px;width:41px;height:27px;background:#fdf9f6;"></div>
<div class="t" style="left:550px;top:293px;width:41px;height:27px;line-height:27px;"><span style="color:#333333">0.89</span></div>
<div style="left:592px;top:291px;width:55px;height:27px;background:#f0f7fb;"></div>
<div class="t" style="left:592px;top:293px;width:55px;height:27px;line-height:27px;"><span style="color:#333333">1.97</span></div>
<div style="left:648px;top:291px;width:56px;height:27px;background:#f0f7fb;"></div>
<div class="t" style="left:648px;top:293px;width:56px;height:27px;line-height:27px;"><span style="color:#3a5ca6">3.09</span></div>
<div style="left:705px;top:291px;width:70px;height:27px;background:#f0f7fb;"></div>
<div class="t" style="left:705px;top:293px;width:70px;height:27px;line-height:27px;"><span style="color:#333333">4.29</span></div>
<div style="left:776px;top:291px;width:37px;height:27px;background:#f0f0f0;"></div>
<div class="t" style="left:776px;top:293px;width:37px;height:27px;line-height:27px;"><span style="color:#ff0000"><span class="k">胜</span></span></div>
<div style="left:814px;top:291px;width:37px;height:27px;background:#f0f0f0;"></div>
<div class="t" style="left:814px;top:293px;width:37px;height:27px;line-height:27px;"><span style="color:#ff0000"><span class="k">赢</span></span></div>
<div style="left:852px;top:291px;width:53px;height:27px;background:#f0f0f0;"></div>
<div class="t" style="left:852px;top:293px;width:53px;height:27px;line-height:27px;"><span style="color:#ff0000"><span class="k">大</span></span></div>
<div style="left:0px;top:318px;width:905px;height:1px;background:#bcbcbc;"></div>
<div style="left:70px;top:291px;width:1px;height:27px;background:#bcbcbc;"></div>
<div style="left:142px;top:291px;width:1px;height:27px;background:#bcbcbc;"></div>
<div style="left:244px;top:291px;width:1px;height:27px;background:#bcbcbc;"></div>
<div style="left:330px;top:291px;width:1px;height:27px;background:#bcbcbc;"></div>
<div style="left:368px;top:291px;width:1px;height:27px;background:#bcbcbc;"></div>
<div style="left:440px;top:291px;width:1px;height:27px;background:#bcbcbc;"></div>
<div style="left:481px;top:291px;width:1px;height:27px;background:#bcbcbc;"></div>
<div style="left:549px;top:291px;width:1px;height:27px;background:#bcbcbc;"></div>
<div style="left:591px;top:291px;width:1px;height:27px;background:#bcbcbc;"></div>
<div style="left:647px;top:291px;width:1px;height:27px;background:#bcbcbc;"></div>
<div style="left:704px;top:291px;width:1px;height:27px;background:#bcbcbc;"></div>
<div style="left:775px;top:291px;width:1px;height:27px;background:#bcbcbc;"></div>
<div style="left:813px;top:291px;width:1px;height:27px;background:#bcbcbc;"></div>
<div style="left:851px;top:291px;width:1px;height:27px;background:#bcbcbc;"></div>
<div style="left:0px;top:319px;width:70px;height:27px;background:#f26329;"></div>
<div class="t" style="left:-2px;top:321px;width:70px;height:27px;line-height:27px;"><span style="color:#fff"><span class="k">南美预选</span></span></div>
<div style="left:71px;top:319px;width:71px;height:27px;background:#ffffff;"></div>
<div class="t" style="left:71px;top:321px;width:71px;height:27px;line-height:27px;"><span style="color:#333333">23-09-08</span></div>
<div style="left:143px;top:319px;width:101px;height:27px;background:#ffffff;"></div>
<div class="t" style="left:143px;top:321px;width:101px;height:27px;line-height:27px;"><span style="color:#000"><span class="k">阿根廷</span></span></div>
<div style="left:245px;top:319px;width:85px;height:27px;background:#ffffff;"></div>
<div class="t" style="left:245px;top:321px;width:85px;height:27px;line-height:27px;"><span style="color:#ff0000">1-0</span><span style="color:#333333">(0-0)</span></div>
<div style="left:331px;top:319px;width:37px;height:27px;background:#ffffff;"></div>
<div class="t" style="left:331px;top:321px;width:37px;height:27px;line-height:27px;"><span style="color:#333333">4-2</span></div>
<div style="left:369px;top:319px;width:71px;height:27px;background:#ffffff;"></div>
<div class="t" style="left:369px;top:321px;width:71px;height:27px;line-height:27px;"><span style="color:#008000"><span class="k">厄瓜多尔</span></span></div>
<div style="left:441px;top:319px;width:40px;height:27px;background:#fdf9f6;"></div>
<div class="t" style="left:441px;top:321px;width:40px;height:27px;line-height:27px;"><span style="color:#333333">0.83</span></div>
<div style="left:482px;top:319px;width:67px;height:27px;background:#fdf9f6;"></div>
<div class="t" style="left:482px;top:321px;width:67px;height:27px;line-height:27px;"><span style="color:#2d55a3"><span class="k">一</span><span class="sl">/</span><span class="k">球半</span></span></div>
<div style="left:550px;top:319px;width:41px;height:27px;background:#fdf9f6;"></div>
<div class="t" style="left:550px;top:321px;width:41px;height:27px;line-height:27px;"><span style="color:#333333">1.07</span></div>
<div style="left:592px;top:319px;width:55px;height:27px;background:#f0f7fb;"></div>
<div class="t" style="left:592px;top:321px;width:55px;height:27px;line-height:27px;"><span style="color:#333333">1.36</span></div>
<div style="left:648px;top:319px;width:56px;height:27px;background:#f0f7fb;"></div>
<div class="t" style="left:648px;top:321px;width:56px;height:27px;line-height:27px;"><span style="color:#3a5ca6">4.52</span></div>
<div style="left:705px;top:319px;width:70px;height:27px;background:#f0f7fb;"></div>
<div class="t" style="left:705px;top:321px;width:70px;height:27px;line-height:27px;"><span style="color:#333333">9.66</span></div>
<div style="left:776px;top:319px;width:37px;height:27px;background:#ffffff;"></div>
<div class="t" style="left:776px;top:321px;width:37px;height:27px;line-height:27px;"><span style="color:#008000"><span class="k">负</span></span></div>
<div style="left:814px;top:319px;width:37px;height:27px;background:#ffffff;"></div>
<div class="t" style="left:814px;top:321px;width:37px;height:27px;line-height:27px;"><span style="color:#ff0000"><span class="k">赢</span></span></div>
<div style="left:852px;top:319px;width:53px;height:27px;background:#ffffff;"></div>
<div class="t" style="left:852px;top:321px;width:53px;height:27px;line-height:27px;"><span style="color:#008000"><span class="k">小</span></span></div>
<div style="left:0px;top:346px;width:905px;height:1px;background:#bcbcbc;"></div>
<div style="left:70px;top:319px;width:1px;height:27px;background:#bcbcbc;"></div>
<div style="left:142px;top:319px;width:1px;height:27px;background:#bcbcbc;"></div>
<div style="left:244px;top:319px;width:1px;height:27px;background:#bcbcbc;"></div>
<div style="left:330px;top:319px;width:1px;height:27px;background:#bcbcbc;"></div>
<div style="left:368px;top:319px;width:1px;height:27px;background:#bcbcbc;"></div>
<div style="left:440px;top:319px;width:1px;height:27px;background:#bcbcbc;"></div>
<div style="left:481px;top:319px;width:1px;height:27px;background:#bcbcbc;"></div>
<div style="left:549px;top:319px;width:1px;height:27px;background:#bcbcbc;"></div>
<div style="left:591px;top:319px;width:1px;height:27px;background:#bcbcbc;"></div>
<div style="left:647px;top:319px;width:1px;height:27px;background:#bcbcbc;"></div>
<div style="left:704px;top:319px;width:1px;height:27px;background:#bcbcbc;"></div>
<div style="left:775px;top:319px;width:1px;height:27px;background:#bcbcbc;"></div>
<div style="left:813px;top:319px;width:1px;height:27px;background:#bcbcbc;"></div>
<div style="left:851px;top:319px;width:1px;height:27px;background:#bcbcbc;"></div>
<div style="left:0px;top:347px;width:70px;height:27px;background:#4867b8;"></div>
<div class="t" style="left:-2px;top:349px;width:70px;height:27px;line-height:27px;"><span style="color:#fff"><span class="k">国际友谊</span></span></div>
<div style="left:71px;top:347px;width:71px;height:27px;background:#f0f0f0;"></div>
<div class="t" style="left:71px;top:349px;width:71px;height:27px;line-height:27px;"><span style="color:#333333">23-06-21</span></div>
<div style="left:143px;top:347px;width:101px;height:27px;background:#f0f0f0;"></div>
<div class="t" style="left:143px;top:349px;width:101px;height:27px;line-height:27px;"><span style="color:#008000"><span class="k">厄瓜多尔</span><span class="pa">(</span><span class="k">中</span><span class="pa">)</span></span></div>
<div style="left:245px;top:347px;width:85px;height:27px;background:#f0f0f0;"></div>
<div class="t" style="left:245px;top:349px;width:85px;height:27px;line-height:27px;"><span style="color:#ff0000">3-1</span><span style="color:#333333">(1-0)</span></div>
<div style="left:331px;top:347px;width:37px;height:27px;background:#f0f0f0;"></div>
<div class="t" style="left:331px;top:349px;width:37px;height:27px;line-height:27px;"><span style="color:#333333">7-1</span></div>
<div style="left:369px;top:347px;width:71px;height:27px;background:#f0f0f0;"></div>
<div class="t" style="left:369px;top:349px;width:71px;height:27px;line-height:27px;"><span style="color:#000"><span class="k">哥斯达黎</span></span></div>
<div style="left:441px;top:347px;width:40px;height:27px;background:#fdf9f6;"></div>
<div class="t" style="left:441px;top:349px;width:40px;height:27px;line-height:27px;"><span style="color:#333333">1.07</span></div>
<div style="left:482px;top:347px;width:67px;height:27px;background:#fdf9f6;"></div>
<div class="t" style="left:482px;top:349px;width:67px;height:27px;line-height:27px;"><span style="color:#2d55a3"><span class="k">球半</span></span></div>
<div style="left:550px;top:347px;width:41px;height:27px;background:#fdf9f6;"></div>
<div class="t" style="left:550px;top:349px;width:41px;height:27px;line-height:27px;"><span style="color:#333333">0.83</span></div>
<div style="left:592px;top:347px;width:55px;height:27px;background:#f0f7fb;"></div>
<div class="t" style="left:592px;top:349px;width:55px;height:27px;line-height:27px;"><span style="color:#333333">1.38</span></div>
<div style="left:648px;top:347px;width:56px;height:27px;background:#f0f7fb;"></div>
<div class="t" style="left:648px;top:349px;width:56px;height:27px;line-height:27px;"><span style="color:#3a5ca6">4.43</span></div>
<div style="left:705px;top:347px;width:70px;height:27px;background:#f0f7fb;"></div>
<div class="t" style="left:705px;top:349px;width:70px;height:27px;line-height:27px;"><span style="color:#333333">8.49</span></div>
<div style="left:776px;top:347px;width:37px;height:27px;background:#f0f0f0;"></div>
<div class="t" style="left:776px;top:349px;width:37px;height:27px;line-height:27px;"><span style="color:#ff0000"><span class="k">胜</span></span></div>
<div style="left:814px;top:347px;width:37px;height:27px;background:#f0f0f0;"></div>
<div class="t" style="left:814px;top:349px;width:37px;height:27px;line-height:27px;"><span style="color:#ff0000"><span class="k">赢</span></span></div>
<div style="left:852px;top:347px;width:53px;height:27px;background:#f0f0f0;"></div>
<div class="t" style="left:852px;top:349px;width:53px;height:27px;line-height:27px;"><span style="color:#ff0000"><span class="k">大</span></span></div>
<div style="left:0px;top:374px;width:905px;height:1px;background:#bcbcbc;"></div>
<div style="left:70px;top:347px;width:1px;height:27px;background:#bcbcbc;"></div>
<div style="left:142px;top:347px;width:1px;height:27px;background:#bcbcbc;"></div>
<div style="left:244px;top:347px;width:1px;height:27px;background:#bcbcbc;"></div>
<div style="left:330px;top:347px;width:1px;height:27px;background:#bcbcbc;"></div>
<div style="left:368px;top:347px;width:1px;height:27px;background:#bcbcbc;"></div>
<div style="left:440px;top:347px;width:1px;height:27px;background:#bcbcbc;"></div>
<div style="left:481px;top:347px;width:1px;height:27px;background:#bcbcbc;"></div>
<div style="left:549px;top:347px;width:1px;height:27px;background:#bcbcbc;"></div>
<div style="left:591px;top:347px;width:1px;height:27px;background:#bcbcbc;"></div>
<div style="left:647px;top:347px;width:1px;height:27px;background:#bcbcbc;"></div>
<div style="left:704px;top:347px;width:1px;height:27px;background:#bcbcbc;"></div>
<div style="left:775px;top:347px;width:1px;height:27px;background:#bcbcbc;"></div>
<div style="left:813px;top:347px;width:1px;height:27px;background:#bcbcbc;"></div>
<div style="left:851px;top:347px;width:1px;height:27px;background:#bcbcbc;"></div>
<div style="left:0px;top:375px;width:905px;height:27px;background:#ffffff;"></div>
<div class="sm" style="left:290px;top:384px"><span style="color:#333333"><span class="k">近</span></span><span style="color:#ff0000">10</span><span style="color:#333333"><span class="k">场</span>,<span class="k">胜</span>5<span class="k">平</span>2<span class="k">负</span>3,</span></div>
<div class="sm" style="left:394px;top:384px"><span style="color:#333333"><span class="k">胜率</span>:</span><span style="color:#0000ff">50%</span></div>
<div class="sm" style="left:451px;top:384px"><span style="color:#333333"><span class="k">赢率</span>:</span><span style="color:#0000ff">60%</span></div>
<div class="sm" style="left:507px;top:384px"><span style="color:#333333"><span class="k">大</span>:</span></div>
<div class="gb" style="left:524px;top:379px;width:34px"><span style="position:relative;top:1px">30%</span></div>
<div class="sm" style="left:562px;top:384px"><span style="color:#333333"><span class="k">单率</span>:</span><span style="color:#0000ff">50%</span></div>
<div style="left:0px;top:402px;width:905px;height:1px;background:#bcbcbc;"></div>
<div style="left:0px;top:402px;width:905px;height:1px;background:#bcbcbc;"></div>
<div style="left:0px;top:403px;width:905px;height:1px;background:#e6e9ee;"></div>
<div style="left:0px;top:404px;width:905px;height:24px;background:#dce3ec;"></div>
<div style="left:0px;top:428px;width:905px;height:1px;background:#bcbcbc;"></div>
<div class="t" style="left:17px;top:406px;width:80px;height:24px;line-height:24px;color:#2f52a8;font-weight:bold;font-size:14px;letter-spacing:-1px;text-align:left">玻利维亚</div>
<div class="o" style="left:345px;top:413px"><span class="k">近</span></div>
<div class="sel" style="left:361px;top:410px;width:36px;height:16px"><span style="position:absolute;left:3px;top:1px;line-height:14px;font-size:11px">10</span><svg style="position:absolute;left:20px;top:4px" width="10" height="6" viewBox="0 0 10 6"><path d="M1 1 L5 5 L9 1" fill="none" stroke="#000" stroke-width="2"/></svg></div>
<div class="o" style="left:401px;top:413px"><span class="k">场</span></div>
<input type="checkbox" class="c" style="left:417px;top:412px">
<div class="o" style="left:434px;top:413px"><span class="k">同客</span></div>
<input type="checkbox" class="c" checked style="left:461px;top:412px">
<div class="o" style="left:474px;top:413px"><span class="k">国际友谊</span></div>
<input type="checkbox" class="c" checked style="left:522px;top:412px">
<div class="o" style="left:535px;top:413px"><span class="k">南美预选</span></div>
<input type="checkbox" class="c" checked style="left:583px;top:412px">
<div class="o" style="left:596px;top:413px"><span class="k">美洲杯</span></div>
<div style="left:0px;top:429px;width:905px;height:40px;background:#dce3ec;"></div>
<div style="left:440px;top:451px;width:465px;height:1px;background:#bcbcbc;"></div>
<div style="left:0px;top:469px;width:905px;height:1px;background:#bcbcbc;"></div>
<div style="left:70px;top:429px;width:1px;height:40px;background:#bcbcbc;"></div>
<div style="left:142px;top:429px;width:1px;height:40px;background:#bcbcbc;"></div>
<div style="left:244px;top:429px;width:1px;height:40px;background:#bcbcbc;"></div>
<div style="left:329px;top:429px;width:1px;height:40px;background:#bcbcbc;"></div>
<div style="left:367px;top:429px;width:1px;height:40px;background:#bcbcbc;"></div>
<div style="left:439px;top:429px;width:1px;height:40px;background:#bcbcbc;"></div>
<div style="left:439px;top:429px;width:1px;height:22px;background:#bcbcbc;"></div>
<div style="left:591px;top:429px;width:1px;height:22px;background:#bcbcbc;"></div>
<div style="left:776px;top:429px;width:1px;height:22px;background:#bcbcbc;"></div>
<div style="left:439px;top:452px;width:1px;height:17px;background:#bcbcbc;"></div>
<div style="left:476px;top:452px;width:1px;height:17px;background:#bcbcbc;"></div>
<div style="left:554px;top:452px;width:1px;height:17px;background:#bcbcbc;"></div>
<div style="left:591px;top:452px;width:1px;height:17px;background:#bcbcbc;"></div>
<div style="left:644px;top:452px;width:1px;height:17px;background:#bcbcbc;"></div>
<div style="left:710px;top:452px;width:1px;height:17px;background:#bcbcbc;"></div>
<div style="left:776px;top:452px;width:1px;height:17px;background:#bcbcbc;"></div>
<div style="left:813px;top:452px;width:1px;height:17px;background:#bcbcbc;"></div>
<div style="left:851px;top:452px;width:1px;height:17px;background:#bcbcbc;"></div>
<div class="t" style="left:-2px;top:432px;width:70px;height:40px;line-height:40px;color:#222"><span class="k">类型</span></div>
<div class="t" style="left:71px;top:432px;width:71px;height:40px;line-height:40px;color:#222"><span class="k">日期</span></div>
<div class="t" style="left:143px;top:432px;width:101px;height:40px;line-height:40px;color:#222"><span class="k">主场</span></div>
<div class="t" style="left:245px;top:432px;width:84px;height:40px;line-height:40px;color:#222"><span class="k">比分</span><span class="pa">(</span><span class="k">半场</span><span class="pa">)</span></div>
<div class="t" style="left:330px;top:432px;width:37px;height:40px;line-height:40px;color:#222"><span class="k">角球</span></div>
<div class="t" style="left:368px;top:432px;width:71px;height:40px;line-height:40px;color:#222"><span class="k">客场</span></div>
<div class="t" style="left:440px;top:454px;width:36px;height:17px;line-height:17px;color:#222"><span class="k">主</span></div>
<div class="t" style="left:477px;top:454px;width:77px;height:17px;line-height:17px;color:#222"><span class="k">盘口</span></div>
<div class="t" style="left:555px;top:454px;width:36px;height:17px;line-height:17px;color:#222"><span class="k">客</span></div>
<div class="t" style="left:592px;top:454px;width:52px;height:17px;line-height:17px;color:#222"><span class="k">主</span></div>
<div class="t" style="left:645px;top:454px;width:65px;height:17px;line-height:17px;color:#222"><span class="k">和</span></div>
<div class="t" style="left:711px;top:454px;width:65px;height:17px;line-height:17px;color:#222"><span class="k">客</span></div>
<div class="t" style="left:777px;top:454px;width:36px;height:17px;line-height:17px;color:#222"><span class="k">胜负</span></div>
<div class="t" style="left:814px;top:454px;width:37px;height:17px;line-height:17px;color:#222"><span class="k">让球</span></div>
<div class="t" style="left:852px;top:454px;width:53px;height:17px;line-height:17px;color:#222"><span class="k">进球数</span></div>
<div class="sel" style="left:464px;top:430px;width:60px;height:20px"><span style="position:absolute;left:4px;top:1px;line-height:18px;font-size:13px">Crow*</span><svg style="position:absolute;left:44px;top:6px" width="10" height="6" viewBox="0 0 10 6"><path d="M1 1 L5 5 L9 1" fill="none" stroke="#000" stroke-width="2"/></svg></div>
<div class="sel" style="left:531px;top:430px;width:36px;height:20px"><span style="position:absolute;left:4px;top:1px;line-height:18px;font-size:13px"><span class="k2">终</span></span><svg style="position:absolute;left:20px;top:6px" width="10" height="6" viewBox="0 0 10 6"><path d="M1 1 L5 5 L9 1" fill="none" stroke="#000" stroke-width="2"/></svg></div>
<div class="sel" style="left:620px;top:430px;width:84px;height:20px"><span style="position:absolute;left:4px;top:1px;line-height:18px;font-size:13px"><span class="k2">胜平负均值</span></span><svg style="position:absolute;left:68px;top:6px" width="10" height="6" viewBox="0 0 10 6"><path d="M1 1 L5 5 L9 1" fill="none" stroke="#000" stroke-width="2"/></svg></div>
<div class="sel" style="left:712px;top:430px;width:36px;height:20px"><span style="position:absolute;left:4px;top:1px;line-height:18px;font-size:13px"><span class="k2">终</span></span><svg style="position:absolute;left:20px;top:6px" width="10" height="6" viewBox="0 0 10 6"><path d="M1 1 L5 5 L9 1" fill="none" stroke="#000" stroke-width="2"/></svg></div>
<div class="sel" style="left:818px;top:430px;width:48px;height:20px"><span style="position:absolute;left:4px;top:1px;line-height:18px;font-size:13px"><span class="k2">全场</span></span><svg style="position:absolute;left:32px;top:6px" width="10" height="6" viewBox="0 0 10 6"><path d="M1 1 L5 5 L9 1" fill="none" stroke="#000" stroke-width="2"/></svg></div>
<div style="left:0px;top:470px;width:70px;height:27px;background:#4867b8;"></div>
<div class="t" style="left:-2px;top:472px;width:70px;height:27px;line-height:27px;"><span style="color:#fff"><span class="k">国际友谊</span></span></div>
<div style="left:71px;top:470px;width:71px;height:27px;background:#ffffff;"></div>
<div class="t" style="left:71px;top:472px;width:71px;height:27px;line-height:27px;"><span style="color:#333333">24-06-01</span></div>
<div style="left:143px;top:470px;width:101px;height:27px;background:#ffffff;"></div>
<div class="t" style="left:143px;top:472px;width:101px;height:27px;line-height:27px;"><span style="color:#000"><span class="k">墨西哥<span class="pl">（</span>中<span class="pr">）</span></span></span></div>
<div style="left:245px;top:470px;width:84px;height:27px;background:#ffffff;"></div>
<div class="t" style="left:245px;top:472px;width:84px;height:27px;line-height:27px;"><span style="color:#ff0000">1-0</span><span style="color:#333333">(0-0)</span></div>
<div style="left:330px;top:470px;width:37px;height:27px;background:#ffffff;"></div>
<div class="t" style="left:330px;top:472px;width:37px;height:27px;line-height:27px;"><span style="color:#333333">8-5</span></div>
<div style="left:368px;top:470px;width:71px;height:27px;background:#ffffff;"></div>
<div class="t" style="left:368px;top:472px;width:71px;height:27px;line-height:27px;"><span style="color:#008000"><span class="k">玻利维亚</span></span></div>
<div style="left:440px;top:470px;width:36px;height:27px;background:#fdf9f6;"></div>
<div class="t" style="left:440px;top:472px;width:36px;height:27px;line-height:27px;"><span style="color:#333333">0.81</span></div>
<div style="left:477px;top:470px;width:77px;height:27px;background:#fdf9f6;"></div>
<div class="t" style="left:477px;top:472px;width:77px;height:27px;line-height:27px;"><span style="color:#2d55a3"><span class="k">一球</span></span></div>
<div style="left:555px;top:470px;width:36px;height:27px;background:#fdf9f6;"></div>
<div class="t" style="left:555px;top:472px;width:36px;height:27px;line-height:27px;"><span style="color:#333333">1.06</span></div>
<div style="left:592px;top:470px;width:52px;height:27px;background:#f0f7fb;"></div>
<div class="t" style="left:592px;top:472px;width:52px;height:27px;line-height:27px;"><span style="color:#333333">1.41</span></div>
<div style="left:645px;top:470px;width:65px;height:27px;background:#f0f7fb;"></div>
<div class="t" style="left:645px;top:472px;width:65px;height:27px;line-height:27px;"><span style="color:#3a5ca6">4.48</span></div>
<div style="left:711px;top:470px;width:65px;height:27px;background:#f0f7fb;"></div>
<div class="t" style="left:711px;top:472px;width:65px;height:27px;line-height:27px;"><span style="color:#333333">6.92</span></div>
<div style="left:777px;top:470px;width:36px;height:27px;background:#ffffff;"></div>
<div class="t" style="left:777px;top:472px;width:36px;height:27px;line-height:27px;"><span style="color:#008000"><span class="k">负</span></span></div>
<div style="left:814px;top:470px;width:37px;height:27px;background:#ffffff;"></div>
<div class="t" style="left:814px;top:472px;width:37px;height:27px;line-height:27px;"><span style="color:#0000ff"><span class="k">走</span></span></div>
<div style="left:852px;top:470px;width:53px;height:27px;background:#ffffff;"></div>
<div class="t" style="left:852px;top:472px;width:53px;height:27px;line-height:27px;"><span style="color:#008000"><span class="k">小</span></span></div>
<div style="left:0px;top:497px;width:905px;height:1px;background:#bcbcbc;"></div>
<div style="left:70px;top:470px;width:1px;height:27px;background:#bcbcbc;"></div>
<div style="left:142px;top:470px;width:1px;height:27px;background:#bcbcbc;"></div>
<div style="left:244px;top:470px;width:1px;height:27px;background:#bcbcbc;"></div>
<div style="left:329px;top:470px;width:1px;height:27px;background:#bcbcbc;"></div>
<div style="left:367px;top:470px;width:1px;height:27px;background:#bcbcbc;"></div>
<div style="left:439px;top:470px;width:1px;height:27px;background:#bcbcbc;"></div>
<div style="left:476px;top:470px;width:1px;height:27px;background:#bcbcbc;"></div>
<div style="left:554px;top:470px;width:1px;height:27px;background:#bcbcbc;"></div>
<div style="left:591px;top:470px;width:1px;height:27px;background:#bcbcbc;"></div>
<div style="left:644px;top:470px;width:1px;height:27px;background:#bcbcbc;"></div>
<div style="left:710px;top:470px;width:1px;height:27px;background:#bcbcbc;"></div>
<div style="left:776px;top:470px;width:1px;height:27px;background:#bcbcbc;"></div>
<div style="left:813px;top:470px;width:1px;height:27px;background:#bcbcbc;"></div>
<div style="left:851px;top:470px;width:1px;height:27px;background:#bcbcbc;"></div>
<div style="left:0px;top:498px;width:70px;height:27px;background:#4867b8;"></div>
<div class="t" style="left:-2px;top:500px;width:70px;height:27px;line-height:27px;"><span style="color:#fff"><span class="k">国际友谊</span></span></div>
<div style="left:71px;top:498px;width:71px;height:27px;background:#f0f0f0;"></div>
<div class="t" style="left:71px;top:500px;width:71px;height:27px;line-height:27px;"><span style="color:#333333">24-03-26</span></div>
<div style="left:143px;top:498px;width:101px;height:27px;background:#f0f0f0;"></div>
<div class="t" style="left:143px;top:500px;width:101px;height:27px;line-height:27px;"><span style="color:#008000"><span class="k">玻利维亚</span><span class="pa">(</span><span class="k">中</span><span class="pa">)</span></span></div>
<div style="left:245px;top:498px;width:84px;height:27px;background:#f0f0f0;"></div>
<div class="t" style="left:245px;top:500px;width:84px;height:27px;line-height:27px;"><span style="color:#ff0000">1-0</span><span style="color:#333333">(1-0)</span></div>
<div style="left:330px;top:498px;width:37px;height:27px;background:#f0f0f0;"></div>
<div class="t" style="left:330px;top:500px;width:37px;height:27px;line-height:27px;"><span style="color:#333333">4-8</span></div>
<div style="left:368px;top:498px;width:71px;height:27px;background:#f0f0f0;"></div>
<div class="t" style="left:368px;top:500px;width:71px;height:27px;line-height:27px;"><span style="color:#000"><span class="k">安道尔</span></span></div>
<div style="left:440px;top:498px;width:36px;height:27px;background:#fdf9f6;"></div>
<div class="t" style="left:440px;top:500px;width:36px;height:27px;line-height:27px;"><span style="color:#333333">1.03</span></div>
<div style="left:477px;top:498px;width:77px;height:27px;background:#fdf9f6;"></div>
<div class="t" style="left:477px;top:500px;width:77px;height:27px;line-height:27px;"><span style="color:#2d55a3"><span class="k">球半</span></span></div>
<div style="left:555px;top:498px;width:36px;height:27px;background:#fdf9f6;"></div>
<div class="t" style="left:555px;top:500px;width:36px;height:27px;line-height:27px;"><span style="color:#333333">0.79</span></div>
<div style="left:592px;top:498px;width:52px;height:27px;background:#f0f7fb;"></div>
<div class="t" style="left:592px;top:500px;width:52px;height:27px;line-height:27px;"><span style="color:#333333">1.30</span></div>
<div style="left:645px;top:498px;width:65px;height:27px;background:#f0f7fb;"></div>
<div class="t" style="left:645px;top:500px;width:65px;height:27px;line-height:27px;"><span style="color:#3a5ca6">4.52</span></div>
<div style="left:711px;top:498px;width:65px;height:27px;background:#f0f7fb;"></div>
<div class="t" style="left:711px;top:500px;width:65px;height:27px;line-height:27px;"><span style="color:#333333">11.13</span></div>
<div style="left:777px;top:498px;width:36px;height:27px;background:#f0f0f0;"></div>
<div class="t" style="left:777px;top:500px;width:36px;height:27px;line-height:27px;"><span style="color:#ff0000"><span class="k">胜</span></span></div>
<div style="left:814px;top:498px;width:37px;height:27px;background:#f0f0f0;"></div>
<div class="t" style="left:814px;top:500px;width:37px;height:27px;line-height:27px;"><span style="color:#008000"><span class="k">输</span></span></div>
<div style="left:852px;top:498px;width:53px;height:27px;background:#f0f0f0;"></div>
<div class="t" style="left:852px;top:500px;width:53px;height:27px;line-height:27px;"><span style="color:#008000"><span class="k">小</span></span></div>
<div style="left:0px;top:525px;width:905px;height:1px;background:#bcbcbc;"></div>
<div style="left:70px;top:498px;width:1px;height:27px;background:#bcbcbc;"></div>
<div style="left:142px;top:498px;width:1px;height:27px;background:#bcbcbc;"></div>
<div style="left:244px;top:498px;width:1px;height:27px;background:#bcbcbc;"></div>
<div style="left:329px;top:498px;width:1px;height:27px;background:#bcbcbc;"></div>
<div style="left:367px;top:498px;width:1px;height:27px;background:#bcbcbc;"></div>
<div style="left:439px;top:498px;width:1px;height:27px;background:#bcbcbc;"></div>
<div style="left:476px;top:498px;width:1px;height:27px;background:#bcbcbc;"></div>
<div style="left:554px;top:498px;width:1px;height:27px;background:#bcbcbc;"></div>
<div style="left:591px;top:498px;width:1px;height:27px;background:#bcbcbc;"></div>
<div style="left:644px;top:498px;width:1px;height:27px;background:#bcbcbc;"></div>
<div style="left:710px;top:498px;width:1px;height:27px;background:#bcbcbc;"></div>
<div style="left:776px;top:498px;width:1px;height:27px;background:#bcbcbc;"></div>
<div style="left:813px;top:498px;width:1px;height:27px;background:#bcbcbc;"></div>
<div style="left:851px;top:498px;width:1px;height:27px;background:#bcbcbc;"></div>
<div style="left:0px;top:526px;width:70px;height:27px;background:#4867b8;"></div>
<div class="t" style="left:-2px;top:528px;width:70px;height:27px;line-height:27px;"><span style="color:#fff"><span class="k">国际友谊</span></span></div>
<div style="left:71px;top:526px;width:71px;height:27px;background:#ffffff;"></div>
<div class="t" style="left:71px;top:528px;width:71px;height:27px;line-height:27px;"><span style="color:#333333">24-03-23</span></div>
<div style="left:143px;top:526px;width:101px;height:27px;background:#ffffff;"></div>
<div class="t" style="left:143px;top:528px;width:101px;height:27px;line-height:27px;"><span style="color:#000"><span class="k">阿尔及利</span></span></div>
<div style="left:245px;top:526px;width:84px;height:27px;background:#ffffff;"></div>
<div class="t" style="left:245px;top:528px;width:84px;height:27px;line-height:27px;"><span style="color:#ff0000">3-2</span><span style="color:#333333">(1-0)</span></div>
<div style="left:330px;top:526px;width:37px;height:27px;background:#ffffff;"></div>
<div class="t" style="left:330px;top:528px;width:37px;height:27px;line-height:27px;"><span style="color:#333333">10-1</span></div>
<div style="left:368px;top:526px;width:71px;height:27px;background:#ffffff;"></div>
<div class="t" style="left:368px;top:528px;width:71px;height:27px;line-height:27px;"><span style="color:#008000"><span class="k">玻利维亚</span></span></div>
<div style="left:440px;top:526px;width:36px;height:27px;background:#fdf9f6;"></div>
<div class="t" style="left:440px;top:528px;width:36px;height:27px;line-height:27px;"><span style="color:#333333">1.02</span></div>
<div style="left:477px;top:526px;width:77px;height:27px;background:#fdf9f6;"></div>
<div class="t" style="left:477px;top:528px;width:77px;height:27px;line-height:27px;"><span style="color:#2d55a3"><span class="k">球半</span><span class="sl">/</span><span class="k">两</span></span></div>
<div style="left:555px;top:526px;width:36px;height:27px;background:#fdf9f6;"></div>
<div class="t" style="left:555px;top:528px;width:36px;height:27px;line-height:27px;"><span style="color:#333333">0.80</span></div>
<div style="left:592px;top:526px;width:52px;height:27px;background:#f0f7fb;"></div>
<div class="t" style="left:592px;top:528px;width:52px;height:27px;line-height:27px;"><span style="color:#333333">1.22</span></div>
<div style="left:645px;top:526px;width:65px;height:27px;background:#f0f7fb;"></div>
<div class="t" style="left:645px;top:528px;width:65px;height:27px;line-height:27px;"><span style="color:#3a5ca6">5.53</span></div>
<div style="left:711px;top:526px;width:65px;height:27px;background:#f0f7fb;"></div>
<div class="t" style="left:711px;top:528px;width:65px;height:27px;line-height:27px;"><span style="color:#333333">12.01</span></div>
<div style="left:777px;top:526px;width:36px;height:27px;background:#ffffff;"></div>
<div class="t" style="left:777px;top:528px;width:36px;height:27px;line-height:27px;"><span style="color:#008000"><span class="k">负</span></span></div>
<div style="left:814px;top:526px;width:37px;height:27px;background:#ffffff;"></div>
<div class="t" style="left:814px;top:528px;width:37px;height:27px;line-height:27px;"><span style="color:#ff0000"><span class="k">赢</span></span></div>
<div style="left:852px;top:526px;width:53px;height:27px;background:#ffffff;"></div>
<div class="t" style="left:852px;top:528px;width:53px;height:27px;line-height:27px;"><span style="color:#ff0000"><span class="k">大</span></span></div>
<div style="left:0px;top:553px;width:905px;height:1px;background:#bcbcbc;"></div>
<div style="left:70px;top:526px;width:1px;height:27px;background:#bcbcbc;"></div>
<div style="left:142px;top:526px;width:1px;height:27px;background:#bcbcbc;"></div>
<div style="left:244px;top:526px;width:1px;height:27px;background:#bcbcbc;"></div>
<div style="left:329px;top:526px;width:1px;height:27px;background:#bcbcbc;"></div>
<div style="left:367px;top:526px;width:1px;height:27px;background:#bcbcbc;"></div>
<div style="left:439px;top:526px;width:1px;height:27px;background:#bcbcbc;"></div>
<div style="left:476px;top:526px;width:1px;height:27px;background:#bcbcbc;"></div>
<div style="left:554px;top:526px;width:1px;height:27px;background:#bcbcbc;"></div>
<div style="left:591px;top:526px;width:1px;height:27px;background:#bcbcbc;"></div>
<div style="left:644px;top:526px;width:1px;height:27px;background:#bcbcbc;"></div>
<div style="left:710px;top:526px;width:1px;height:27px;background:#bcbcbc;"></div>
<div style="left:776px;top:526px;width:1px;height:27px;background:#bcbcbc;"></div>
<div style="left:813px;top:526px;width:1px;height:27px;background:#bcbcbc;"></div>
<div style="left:851px;top:526px;width:1px;height:27px;background:#bcbcbc;"></div>
<div style="left:0px;top:554px;width:70px;height:27px;background:#f26329;"></div>
<div class="t" style="left:-2px;top:556px;width:70px;height:27px;line-height:27px;"><span style="color:#fff"><span class="k">南美预选</span></span></div>
<div style="left:71px;top:554px;width:71px;height:27px;background:#f0f0f0;"></div>
<div class="t" style="left:71px;top:556px;width:71px;height:27px;line-height:27px;"><span style="color:#333333">23-11-22</span></div>
<div style="left:143px;top:554px;width:101px;height:27px;background:#f0f0f0;"></div>
<div class="t" style="left:143px;top:556px;width:101px;height:27px;line-height:27px;"><span style="color:#000"><span class="k">乌拉圭</span></span></div>
<div style="left:245px;top:554px;width:84px;height:27px;background:#f0f0f0;"></div>
<div class="t" style="left:245px;top:556px;width:84px;height:27px;line-height:27px;"><span style="color:#ff0000">3-0</span><span style="color:#333333">(2-0)</span></div>
<div style="left:330px;top:554px;width:37px;height:27px;background:#f0f0f0;"></div>
<div class="t" style="left:330px;top:556px;width:37px;height:27px;line-height:27px;"><span style="color:#333333">7-1</span></div>
<div style="left:368px;top:554px;width:71px;height:27px;background:#f0f0f0;"></div>
<div class="t" style="left:368px;top:556px;width:71px;height:27px;line-height:27px;"><span style="color:#008000"><span class="k">玻利维亚</span></span></div>
<div style="left:440px;top:554px;width:36px;height:27px;background:#fdf9f6;"></div>
<div class="t" style="left:440px;top:556px;width:36px;height:27px;line-height:27px;"><span style="color:#333333">0.96</span></div>
<div style="left:477px;top:554px;width:77px;height:27px;background:#fdf9f6;"></div>
<div class="t" style="left:477px;top:556px;width:77px;height:27px;line-height:27px;"><span style="color:#2d55a3"><span class="k">两</span><span class="sl">/</span><span class="k">两球半</span></span></div>
<div style="left:555px;top:554px;width:36px;height:27px;background:#fdf9f6;"></div>
<div class="t" style="left:555px;top:556px;width:36px;height:27px;line-height:27px;"><span style="color:#333333">0.93</span></div>
<div style="left:592px;top:554px;width:52px;height:27px;background:#f0f7fb;"></div>
<div class="t" style="left:592px;top:556px;width:52px;height:27px;line-height:27px;"><span style="color:#333333">1.10</span></div>
<div style="left:645px;top:554px;width:65px;height:27px;background:#f0f7fb;"></div>
<div class="t" style="left:645px;top:556px;width:65px;height:27px;line-height:27px;"><span style="color:#3a5ca6">9.37</span></div>
<div style="left:711px;top:554px;width:65px;height:27px;background:#f0f7fb;"></div>
<div class="t" style="left:711px;top:556px;width:65px;height:27px;line-height:27px;"><span style="color:#333333">23.84</span></div>
<div style="left:777px;top:554px;width:36px;height:27px;background:#f0f0f0;"></div>
<div class="t" style="left:777px;top:556px;width:36px;height:27px;line-height:27px;"><span style="color:#008000"><span class="k">负</span></span></div>
<div style="left:814px;top:554px;width:37px;height:27px;background:#f0f0f0;"></div>
<div class="t" style="left:814px;top:556px;width:37px;height:27px;line-height:27px;"><span style="color:#008000"><span class="k">输</span></span></div>
<div style="left:852px;top:554px;width:53px;height:27px;background:#f0f0f0;"></div>
<div class="t" style="left:852px;top:556px;width:53px;height:27px;line-height:27px;"><span style="color:#008000"><span class="k">小</span></span></div>
<div style="left:0px;top:581px;width:905px;height:1px;background:#bcbcbc;"></div>
<div style="left:70px;top:554px;width:1px;height:27px;background:#bcbcbc;"></div>
<div style="left:142px;top:554px;width:1px;height:27px;background:#bcbcbc;"></div>
<div style="left:244px;top:554px;width:1px;height:27px;background:#bcbcbc;"></div>
<div style="left:329px;top:554px;width:1px;height:27px;background:#bcbcbc;"></div>
<div style="left:367px;top:554px;width:1px;height:27px;background:#bcbcbc;"></div>
<div style="left:439px;top:554px;width:1px;height:27px;background:#bcbcbc;"></div>
<div style="left:476px;top:554px;width:1px;height:27px;background:#bcbcbc;"></div>
<div style="left:554px;top:554px;width:1px;height:27px;background:#bcbcbc;"></div>
<div style="left:591px;top:554px;width:1px;height:27px;background:#bcbcbc;"></div>
<div style="left:644px;top:554px;width:1px;height:27px;background:#bcbcbc;"></div>
<div style="left:710px;top:554px;width:1px;height:27px;background:#bcbcbc;"></div>
<div style="left:776px;top:554px;width:1px;height:27px;background:#bcbcbc;"></div>
<div style="left:813px;top:554px;width:1px;height:27px;background:#bcbcbc;"></div>
<div style="left:851px;top:554px;width:1px;height:27px;background:#bcbcbc;"></div>
<div style="left:0px;top:582px;width:70px;height:27px;background:#f26329;"></div>
<div class="t" style="left:-2px;top:584px;width:70px;height:27px;line-height:27px;"><span style="color:#fff"><span class="k">南美预选</span></span></div>
<div style="left:71px;top:582px;width:71px;height:27px;background:#ffffff;"></div>
<div class="t" style="left:71px;top:584px;width:71px;height:27px;line-height:27px;"><span style="color:#333333">23-11-17</span></div>
<div style="left:143px;top:582px;width:101px;height:27px;background:#ffffff;"></div>
<div class="t" style="left:143px;top:584px;width:101px;height:27px;line-height:27px;"><span style="color:#008000"><span class="k">玻利维亚</span></span></div>
<div style="left:245px;top:582px;width:84px;height:27px;background:#ffffff;"></div>
<div class="t" style="left:245px;top:584px;width:84px;height:27px;line-height:27px;"><span style="color:#ff0000">2-0</span><span style="color:#333333">(1-0)</span></div>
<div style="left:330px;top:582px;width:37px;height:27px;background:#ffffff;"></div>
<div class="t" style="left:330px;top:584px;width:37px;height:27px;line-height:27px;"><span style="color:#333333">4-3</span></div>
<div style="left:368px;top:582px;width:71px;height:27px;background:#ffffff;"></div>
<div class="t" style="left:368px;top:584px;width:71px;height:27px;line-height:27px;"><span style="color:#000"><span class="k">秘鲁</span></span></div>
<div style="left:440px;top:582px;width:36px;height:27px;background:#fdf9f6;"></div>
<div class="t" style="left:440px;top:584px;width:36px;height:27px;line-height:27px;"><span style="color:#333333">0.94</span></div>
<div style="left:477px;top:582px;width:77px;height:27px;background:#fdf9f6;"></div>
<div class="t" style="left:477px;top:584px;width:77px;height:27px;line-height:27px;"><span style="color:#2d55a3"><span class="k">平</span><span class="sl">/</span><span class="k">半</span></span></div>
<div style="left:555px;top:582px;width:36px;height:27px;background:#fdf9f6;"></div>
<div class="t" style="left:555px;top:584px;width:36px;height:27px;line-height:27px;"><span style="color:#333333">0.95</span></div>
<div style="left:592px;top:582px;width:52px;height:27px;background:#f0f7fb;"></div>
<div class="t" style="left:592px;top:584px;width:52px;height:27px;line-height:27px;"><span style="color:#333333">2.24</span></div>
<div style="left:645px;top:582px;width:65px;height:27px;background:#f0f7fb;"></div>
<div class="t" style="left:645px;top:584px;width:65px;height:27px;line-height:27px;"><span style="color:#3a5ca6">3.01</span></div>
<div style="left:711px;top:582px;width:65px;height:27px;background:#f0f7fb;"></div>
<div class="t" style="left:711px;top:584px;width:65px;height:27px;line-height:27px;"><span style="color:#333333">3.51</span></div>
<div style="left:777px;top:582px;width:36px;height:27px;background:#ffffff;"></div>
<div class="t" style="left:777px;top:584px;width:36px;height:27px;line-height:27px;"><span style="color:#ff0000"><span class="k">胜</span></span></div>
<div style="left:814px;top:582px;width:37px;height:27px;background:#ffffff;"></div>
<div class="t" style="left:814px;top:584px;width:37px;height:27px;line-height:27px;"><span style="color:#ff0000"><span class="k">赢</span></span></div>
<div style="left:852px;top:582px;width:53px;height:27px;background:#ffffff;"></div>
<div class="t" style="left:852px;top:584px;width:53px;height:27px;line-height:27px;"><span style="color:#0000ff"><span class="k">走</span></span></div>
<div style="left:0px;top:609px;width:905px;height:1px;background:#bcbcbc;"></div>
<div style="left:70px;top:582px;width:1px;height:27px;background:#bcbcbc;"></div>
<div style="left:142px;top:582px;width:1px;height:27px;background:#bcbcbc;"></div>
<div style="left:244px;top:582px;width:1px;height:27px;background:#bcbcbc;"></div>
<div style="left:329px;top:582px;width:1px;height:27px;background:#bcbcbc;"></div>
<div style="left:367px;top:582px;width:1px;height:27px;background:#bcbcbc;"></div>
<div style="left:439px;top:582px;width:1px;height:27px;background:#bcbcbc;"></div>
<div style="left:476px;top:582px;width:1px;height:27px;background:#bcbcbc;"></div>
<div style="left:554px;top:582px;width:1px;height:27px;background:#bcbcbc;"></div>
<div style="left:591px;top:582px;width:1px;height:27px;background:#bcbcbc;"></div>
<div style="left:644px;top:582px;width:1px;height:27px;background:#bcbcbc;"></div>
<div style="left:710px;top:582px;width:1px;height:27px;background:#bcbcbc;"></div>
<div style="left:776px;top:582px;width:1px;height:27px;background:#bcbcbc;"></div>
<div style="left:813px;top:582px;width:1px;height:27px;background:#bcbcbc;"></div>
<div style="left:851px;top:582px;width:1px;height:27px;background:#bcbcbc;"></div>
<div style="left:0px;top:610px;width:70px;height:27px;background:#f26329;"></div>
<div class="t" style="left:-2px;top:612px;width:70px;height:27px;line-height:27px;"><span style="color:#fff"><span class="k">南美预选</span></span></div>
<div style="left:71px;top:610px;width:71px;height:27px;background:#f0f0f0;"></div>
<div class="t" style="left:71px;top:612px;width:71px;height:27px;line-height:27px;"><span style="color:#333333">23-10-18</span></div>
<div style="left:143px;top:610px;width:101px;height:27px;background:#f0f0f0;"></div>
<div class="t" style="left:143px;top:612px;width:101px;height:27px;line-height:27px;"><span style="color:#000"><span class="k">巴拉圭</span></span></div>
<div style="left:245px;top:610px;width:84px;height:27px;background:#f0f0f0;"></div>
<div class="t" style="left:245px;top:612px;width:84px;height:27px;line-height:27px;"><span style="color:#ff0000">1-0</span><span style="color:#333333">(0-0)</span></div>
<div style="left:330px;top:610px;width:37px;height:27px;background:#f0f0f0;"></div>
<div class="t" style="left:330px;top:612px;width:37px;height:27px;line-height:27px;"><span style="color:#333333">8-1</span></div>
<div style="left:368px;top:610px;width:71px;height:27px;background:#f0f0f0;"></div>
<div class="t" style="left:368px;top:612px;width:71px;height:27px;line-height:27px;"><span style="color:#008000"><span class="k">玻利维亚</span></span></div>
<div style="left:440px;top:610px;width:36px;height:27px;background:#fdf9f6;"></div>
<div class="t" style="left:440px;top:612px;width:36px;height:27px;line-height:27px;"><span style="color:#333333">1.01</span></div>
<div style="left:477px;top:610px;width:77px;height:27px;background:#fdf9f6;"></div>
<div class="t" style="left:477px;top:612px;width:77px;height:27px;line-height:27px;"><span style="color:#2d55a3"><span class="k">球半</span></span></div>
<div style="left:555px;top:610px;width:36px;height:27px;background:#fdf9f6;"></div>
<div class="t" style="left:555px;top:612px;width:36px;height:27px;line-height:27px;"><span style="color:#333333">0.89</span></div>
<div style="left:592px;top:610px;width:52px;height:27px;background:#f0f7fb;"></div>
<div class="t" style="left:592px;top:612px;width:52px;height:27px;line-height:27px;"><span style="color:#333333">1.29</span></div>
<div style="left:645px;top:610px;width:65px;height:27px;background:#f0f7fb;"></div>
<div class="t" style="left:645px;top:612px;width:65px;height:27px;line-height:27px;"><span style="color:#3a5ca6">5.23</span></div>
<div style="left:711px;top:610px;width:65px;height:27px;background:#f0f7fb;"></div>
<div class="t" style="left:711px;top:612px;width:65px;height:27px;line-height:27px;"><span style="color:#333333">10.04</span></div>
<div style="left:777px;top:610px;width:36px;height:27px;background:#f0f0f0;"></div>
<div class="t" style="left:777px;top:612px;width:36px;height:27px;line-height:27px;"><span style="color:#008000"><span class="k">负</span></span></div>
<div style="left:814px;top:610px;width:37px;height:27px;background:#f0f0f0;"></div>
<div class="t" style="left:814px;top:612px;width:37px;height:27px;line-height:27px;"><span style="color:#ff0000"><span class="k">赢</span></span></div>
<div style="left:852px;top:610px;width:53px;height:27px;background:#f0f0f0;"></div>
<div class="t" style="left:852px;top:612px;width:53px;height:27px;line-height:27px;"><span style="color:#008000"><span class="k">小</span></span></div>
<div style="left:0px;top:637px;width:905px;height:1px;background:#bcbcbc;"></div>
<div style="left:70px;top:610px;width:1px;height:27px;background:#bcbcbc;"></div>
<div style="left:142px;top:610px;width:1px;height:27px;background:#bcbcbc;"></div>
<div style="left:244px;top:610px;width:1px;height:27px;background:#bcbcbc;"></div>
<div style="left:329px;top:610px;width:1px;height:27px;background:#bcbcbc;"></div>
<div style="left:367px;top:610px;width:1px;height:27px;background:#bcbcbc;"></div>
<div style="left:439px;top:610px;width:1px;height:27px;background:#bcbcbc;"></div>
<div style="left:476px;top:610px;width:1px;height:27px;background:#bcbcbc;"></div>
<div style="left:554px;top:610px;width:1px;height:27px;background:#bcbcbc;"></div>
<div style="left:591px;top:610px;width:1px;height:27px;background:#bcbcbc;"></div>
<div style="left:644px;top:610px;width:1px;height:27px;background:#bcbcbc;"></div>
<div style="left:710px;top:610px;width:1px;height:27px;background:#bcbcbc;"></div>
<div style="left:776px;top:610px;width:1px;height:27px;background:#bcbcbc;"></div>
<div style="left:813px;top:610px;width:1px;height:27px;background:#bcbcbc;"></div>
<div style="left:851px;top:610px;width:1px;height:27px;background:#bcbcbc;"></div>
<div style="left:0px;top:638px;width:70px;height:27px;background:#f26329;"></div>
<div class="t" style="left:-2px;top:640px;width:70px;height:27px;line-height:27px;"><span style="color:#fff"><span class="k">南美预选</span></span></div>
<div style="left:71px;top:638px;width:71px;height:27px;background:#ffffff;"></div>
<div class="t" style="left:71px;top:640px;width:71px;height:27px;line-height:27px;"><span style="color:#333333">23-10-13</span></div>
<div style="left:143px;top:638px;width:101px;height:27px;background:#ffffff;"></div>
<div class="t" style="left:143px;top:640px;width:101px;height:27px;line-height:27px;"><span style="color:#008000"><span class="k">玻利维亚</span></span></div>
<div style="left:245px;top:638px;width:84px;height:27px;background:#ffffff;"></div>
<div class="t" style="left:245px;top:640px;width:84px;height:27px;line-height:27px;"><span style="color:#ff0000">1-2</span><span style="color:#333333">(0-1)</span></div>
<div style="left:330px;top:638px;width:37px;height:27px;background:#ffffff;"></div>
<div class="t" style="left:330px;top:640px;width:37px;height:27px;line-height:27px;"><span style="color:#333333">5-0</span></div>
<div style="left:368px;top:638px;width:71px;height:27px;background:#ffffff;"></div>
<div class="t" style="left:368px;top:640px;width:71px;height:27px;line-height:27px;"><span style="color:#000"><span class="k">厄瓜多尔</span></span></div>
<div style="left:440px;top:638px;width:36px;height:27px;background:#fdf9f6;"></div>
<div class="t" style="left:440px;top:640px;width:36px;height:27px;line-height:27px;"><span style="color:#333333">0.92</span></div>
<div style="left:477px;top:638px;width:77px;height:27px;background:#fdf9f6;"></div>
<div class="t" style="left:477px;top:640px;width:77px;height:27px;line-height:27px;"><span class="ast">*</span><span style="color:#2d55a3"><span class="k">半</span><span class="sl">/</span><span class="k">一</span></span></div>
<div style="left:555px;top:638px;width:36px;height:27px;background:#fdf9f6;"></div>
<div class="t" style="left:555px;top:640px;width:36px;height:27px;line-height:27px;"><span style="color:#333333">0.97</span></div>
<div style="left:592px;top:638px;width:52px;height:27px;background:#f0f7fb;"></div>
<div class="t" style="left:592px;top:640px;width:52px;height:27px;line-height:27px;"><span style="color:#333333">5.06</span></div>
<div style="left:645px;top:638px;width:65px;height:27px;background:#f0f7fb;"></div>
<div class="t" style="left:645px;top:640px;width:65px;height:27px;line-height:27px;"><span style="color:#3a5ca6">3.51</span></div>
<div style="left:711px;top:638px;width:65px;height:27px;background:#f0f7fb;"></div>
<div class="t" style="left:711px;top:640px;width:65px;height:27px;line-height:27px;"><span style="color:#333333">1.72</span></div>
<div style="left:777px;top:638px;width:36px;height:27px;background:#ffffff;"></div>
<div class="t" style="left:777px;top:640px;width:36px;height:27px;line-height:27px;"><span style="color:#008000"><span class="k">负</span></span></div>
<div style="left:814px;top:638px;width:37px;height:27px;background:#ffffff;"></div>
<div class="t" style="left:814px;top:640px;width:37px;height:27px;line-height:27px;"><span style="color:#008000"><span class="k">输</span></span></div>
<div style="left:852px;top:638px;width:53px;height:27px;background:#ffffff;"></div>
<div class="t" style="left:852px;top:640px;width:53px;height:27px;line-height:27px;"><span style="color:#ff0000"><span class="k">大</span></span></div>
<div style="left:0px;top:665px;width:905px;height:1px;background:#bcbcbc;"></div>
<div style="left:70px;top:638px;width:1px;height:27px;background:#bcbcbc;"></div>
<div style="left:142px;top:638px;width:1px;height:27px;background:#bcbcbc;"></div>
<div style="left:244px;top:638px;width:1px;height:27px;background:#bcbcbc;"></div>
<div style="left:329px;top:638px;width:1px;height:27px;background:#bcbcbc;"></div>
<div style="left:367px;top:638px;width:1px;height:27px;background:#bcbcbc;"></div>
<div style="left:439px;top:638px;width:1px;height:27px;background:#bcbcbc;"></div>
<div style="left:476px;top:638px;width:1px;height:27px;background:#bcbcbc;"></div>
<div style="left:554px;top:638px;width:1px;height:27px;background:#bcbcbc;"></div>
<div style="left:591px;top:638px;width:1px;height:27px;background:#bcbcbc;"></div>
<div style="left:644px;top:638px;width:1px;height:27px;background:#bcbcbc;"></div>
<div style="left:710px;top:638px;width:1px;height:27px;background:#bcbcbc;"></div>
<div style="left:776px;top:638px;width:1px;height:27px;background:#bcbcbc;"></div>
<div style="left:813px;top:638px;width:1px;height:27px;background:#bcbcbc;"></div>
<div style="left:851px;top:638px;width:1px;height:27px;background:#bcbcbc;"></div>
<div style="left:0px;top:666px;width:70px;height:27px;background:#f26329;"></div>
<div class="t" style="left:-2px;top:668px;width:70px;height:27px;line-height:27px;"><span style="color:#fff"><span class="k">南美预选</span></span></div>
<div style="left:71px;top:666px;width:71px;height:27px;background:#f0f0f0;"></div>
<div class="t" style="left:71px;top:668px;width:71px;height:27px;line-height:27px;"><span style="color:#333333">23-09-13</span></div>
<div style="left:143px;top:666px;width:101px;height:27px;background:#f0f0f0;"></div>
<div class="t" style="left:143px;top:668px;width:101px;height:27px;line-height:27px;"><span class="red1">1</span><span style="color:#008000"><span class="k">玻利维亚</span></span></div>
<div style="left:245px;top:666px;width:84px;height:27px;background:#f0f0f0;"></div>
<div class="t" style="left:245px;top:668px;width:84px;height:27px;line-height:27px;"><span style="color:#ff0000">0-3</span><span style="color:#333333">(0-2)</span></div>
<div style="left:330px;top:666px;width:37px;height:27px;background:#f0f0f0;"></div>
<div class="t" style="left:330px;top:668px;width:37px;height:27px;line-height:27px;"><span style="color:#333333">1-4</span></div>
<div style="left:368px;top:666px;width:71px;height:27px;background:#f0f0f0;"></div>
<div class="t" style="left:368px;top:668px;width:71px;height:27px;line-height:27px;"><span style="color:#000"><span class="k">阿根廷</span></span></div>
<div style="left:440px;top:666px;width:36px;height:27px;background:#fdf9f6;"></div>
<div class="t" style="left:440px;top:668px;width:36px;height:27px;line-height:27px;"><span style="color:#333333">0.98</span></div>
<div style="left:477px;top:666px;width:77px;height:27px;background:#fdf9f6;"></div>
<div class="t" style="left:477px;top:668px;width:77px;height:27px;line-height:27px;"><span class="ast">*</span><span style="color:#2d55a3"><span class="k">半</span><span class="sl">/</span><span class="k">一</span></span></div>
<div style="left:555px;top:666px;width:36px;height:27px;background:#fdf9f6;"></div>
<div class="t" style="left:555px;top:668px;width:36px;height:27px;line-height:27px;"><span style="color:#333333">0.91</span></div>
<div style="left:592px;top:666px;width:52px;height:27px;background:#f0f7fb;"></div>
<div class="t" style="left:592px;top:668px;width:52px;height:27px;line-height:27px;"><span style="color:#333333">5.90</span></div>
<div style="left:645px;top:666px;width:65px;height:27px;background:#f0f7fb;"></div>
<div class="t" style="left:645px;top:668px;width:65px;height:27px;line-height:27px;"><span style="color:#3a5ca6">3.93</span></div>
<div style="left:711px;top:666px;width:65px;height:27px;background:#f0f7fb;"></div>
<div class="t" style="left:711px;top:668px;width:65px;height:27px;line-height:27px;"><span style="color:#333333">1.57</span></div>
<div style="left:777px;top:666px;width:36px;height:27px;background:#f0f0f0;"></div>
<div class="t" style="left:777px;top:668px;width:36px;height:27px;line-height:27px;"><span style="color:#008000"><span class="k">负</span></span></div>
<div style="left:814px;top:666px;width:37px;height:27px;background:#f0f0f0;"></div>
<div class="t" style="left:814px;top:668px;width:37px;height:27px;line-height:27px;"><span style="color:#008000"><span class="k">输</span></span></div>
<div style="left:852px;top:666px;width:53px;height:27px;background:#f0f0f0;"></div>
<div class="t" style="left:852px;top:668px;width:53px;height:27px;line-height:27px;"><span style="color:#ff0000"><span class="k">大</span></span></div>
<div style="left:0px;top:693px;width:905px;height:1px;background:#bcbcbc;"></div>
<div style="left:70px;top:666px;width:1px;height:27px;background:#bcbcbc;"></div>
<div style="left:142px;top:666px;width:1px;height:27px;background:#bcbcbc;"></div>
<div style="left:244px;top:666px;width:1px;height:27px;background:#bcbcbc;"></div>
<div style="left:329px;top:666px;width:1px;height:27px;background:#bcbcbc;"></div>
<div style="left:367px;top:666px;width:1px;height:27px;background:#bcbcbc;"></div>
<div style="left:439px;top:666px;width:1px;height:27px;background:#bcbcbc;"></div>
<div style="left:476px;top:666px;width:1px;height:27px;background:#bcbcbc;"></div>
<div style="left:554px;top:666px;width:1px;height:27px;background:#bcbcbc;"></div>
<div style="left:591px;top:666px;width:1px;height:27px;background:#bcbcbc;"></div>
<div style="left:644px;top:666px;width:1px;height:27px;background:#bcbcbc;"></div>
<div style="left:710px;top:666px;width:1px;height:27px;background:#bcbcbc;"></div>
<div style="left:776px;top:666px;width:1px;height:27px;background:#bcbcbc;"></div>
<div style="left:813px;top:666px;width:1px;height:27px;background:#bcbcbc;"></div>
<div style="left:851px;top:666px;width:1px;height:27px;background:#bcbcbc;"></div>
<div style="left:0px;top:694px;width:70px;height:27px;background:#f26329;"></div>
<div class="t" style="left:-2px;top:696px;width:70px;height:27px;line-height:27px;"><span style="color:#fff"><span class="k">南美预选</span></span></div>
<div style="left:71px;top:694px;width:71px;height:27px;background:#ffffff;"></div>
<div class="t" style="left:71px;top:696px;width:71px;height:27px;line-height:27px;"><span style="color:#333333">23-09-09</span></div>
<div style="left:143px;top:694px;width:101px;height:27px;background:#ffffff;"></div>
<div class="t" style="left:143px;top:696px;width:101px;height:27px;line-height:27px;"><span style="color:#000"><span class="k">巴西</span></span></div>
<div style="left:245px;top:694px;width:84px;height:27px;background:#ffffff;"></div>
<div class="t" style="left:245px;top:696px;width:84px;height:27px;line-height:27px;"><span style="color:#ff0000">5-1</span><span style="color:#333333">(1-0)</span></div>
<div style="left:330px;top:694px;width:37px;height:27px;background:#ffffff;"></div>
<div class="t" style="left:330px;top:696px;width:37px;height:27px;line-height:27px;"><span style="color:#333333">6-1</span></div>
<div style="left:368px;top:694px;width:71px;height:27px;background:#ffffff;"></div>
<div class="t" style="left:368px;top:696px;width:71px;height:27px;line-height:27px;"><span style="color:#008000"><span class="k">玻利维亚</span></span></div>
<div style="left:440px;top:694px;width:36px;height:27px;background:#fdf9f6;"></div>
<div class="t" style="left:440px;top:696px;width:36px;height:27px;line-height:27px;"><span style="color:#333333">1.03</span></div>
<div style="left:477px;top:694px;width:77px;height:27px;background:#fdf9f6;"></div>
<div class="t" style="left:477px;top:696px;width:77px;height:27px;line-height:27px;"><span style="color:#2d55a3"><span class="k">三</span><span class="sl">/</span><span class="k">三球半</span></span></div>
<div style="left:555px;top:694px;width:36px;height:27px;background:#fdf9f6;"></div>
<div class="t" style="left:555px;top:696px;width:36px;height:27px;line-height:27px;"><span style="color:#333333">0.87</span></div>
<div style="left:592px;top:694px;width:52px;height:27px;background:#f0f7fb;"></div>
<div class="t" style="left:592px;top:696px;width:52px;height:27px;line-height:27px;"><span style="color:#333333">1.04</span></div>
<div style="left:645px;top:694px;width:65px;height:27px;background:#f0f7fb;"></div>
<div class="t" style="left:645px;top:696px;width:65px;height:27px;line-height:27px;"><span style="color:#3a5ca6">14.01</span></div>
<div style="left:711px;top:694px;width:65px;height:27px;background:#f0f7fb;"></div>
<div class="t" style="left:711px;top:696px;width:65px;height:27px;line-height:27px;"><span style="color:#333333">31.40</span></div>
<div style="left:777px;top:694px;width:36px;height:27px;background:#ffffff;"></div>
<div class="t" style="left:777px;top:696px;width:36px;height:27px;line-height:27px;"><span style="color:#008000"><span class="k">负</span></span></div>
<div style="left:814px;top:694px;width:37px;height:27px;background:#ffffff;"></div>
<div class="t" style="left:814px;top:696px;width:37px;height:27px;line-height:27px;"><span style="color:#008000"><span class="k">输</span></span></div>
<div style="left:852px;top:694px;width:53px;height:27px;background:#ffffff;"></div>
<div class="t" style="left:852px;top:696px;width:53px;height:27px;line-height:27px;"><span style="color:#ff0000"><span class="k">大</span></span></div>
<div style="left:0px;top:721px;width:905px;height:1px;background:#bcbcbc;"></div>
<div style="left:70px;top:694px;width:1px;height:27px;background:#bcbcbc;"></div>
<div style="left:142px;top:694px;width:1px;height:27px;background:#bcbcbc;"></div>
<div style="left:244px;top:694px;width:1px;height:27px;background:#bcbcbc;"></div>
<div style="left:329px;top:694px;width:1px;height:27px;background:#bcbcbc;"></div>
<div style="left:367px;top:694px;width:1px;height:27px;background:#bcbcbc;"></div>
<div style="left:439px;top:694px;width:1px;height:27px;background:#bcbcbc;"></div>
<div style="left:476px;top:694px;width:1px;height:27px;background:#bcbcbc;"></div>
<div style="left:554px;top:694px;width:1px;height:27px;background:#bcbcbc;"></div>
<div style="left:591px;top:694px;width:1px;height:27px;background:#bcbcbc;"></div>
<div style="left:644px;top:694px;width:1px;height:27px;background:#bcbcbc;"></div>
<div style="left:710px;top:694px;width:1px;height:27px;background:#bcbcbc;"></div>
<div style="left:776px;top:694px;width:1px;height:27px;background:#bcbcbc;"></div>
<div style="left:813px;top:694px;width:1px;height:27px;background:#bcbcbc;"></div>
<div style="left:851px;top:694px;width:1px;height:27px;background:#bcbcbc;"></div>
<div style="left:0px;top:722px;width:70px;height:27px;background:#4867b8;"></div>
<div class="t" style="left:-2px;top:724px;width:70px;height:27px;line-height:27px;"><span style="color:#fff"><span class="k">国际友谊</span></span></div>
<div style="left:71px;top:722px;width:71px;height:27px;background:#f0f0f0;"></div>
<div class="t" style="left:71px;top:724px;width:71px;height:27px;line-height:27px;"><span style="color:#333333">23-08-28</span></div>
<div style="left:143px;top:722px;width:101px;height:27px;background:#f0f0f0;"></div>
<div class="t" style="left:143px;top:724px;width:101px;height:27px;line-height:27px;"><span style="color:#008000"><span class="k">玻利维亚</span></span></div>
<div style="left:245px;top:722px;width:84px;height:27px;background:#f0f0f0;"></div>
<div class="t" style="left:245px;top:724px;width:84px;height:27px;line-height:27px;"><span style="color:#ff0000">1-2</span><span style="color:#333333">(0-1)</span></div>
<div style="left:330px;top:722px;width:37px;height:27px;background:#f0f0f0;"></div>
<div class="t" style="left:330px;top:724px;width:37px;height:27px;line-height:27px;"><span style="color:#333333">7-1</span></div>
<div style="left:368px;top:722px;width:71px;height:27px;background:#f0f0f0;"></div>
<div class="t" style="left:368px;top:724px;width:71px;height:27px;line-height:27px;"><span style="color:#000"><span class="k">巴拿马</span></span></div>
<div style="left:440px;top:722px;width:36px;height:27px;background:#fdf9f6;"></div>
<div class="t" style="left:440px;top:724px;width:36px;height:27px;line-height:27px;"><span style="color:#333333">1.06</span></div>
<div style="left:477px;top:722px;width:77px;height:27px;background:#fdf9f6;"></div>
<div class="t" style="left:477px;top:724px;width:77px;height:27px;line-height:27px;"><span style="color:#2d55a3"><span class="k">一球</span></span></div>
<div style="left:555px;top:722px;width:36px;height:27px;background:#fdf9f6;"></div>
<div class="t" style="left:555px;top:724px;width:36px;height:27px;line-height:27px;"><span style="color:#333333">0.76</span></div>
<div style="left:592px;top:722px;width:52px;height:27px;background:#f0f7fb;"></div>
<div class="t" style="left:592px;top:724px;width:52px;height:27px;line-height:27px;"><span style="color:#333333">1.60</span></div>
<div style="left:645px;top:722px;width:65px;height:27px;background:#f0f7fb;"></div>
<div class="t" style="left:645px;top:724px;width:65px;height:27px;line-height:27px;"><span style="color:#3a5ca6">3.87</span></div>
<div style="left:711px;top:722px;width:65px;height:27px;background:#f0f7fb;"></div>
<div class="t" style="left:711px;top:724px;width:65px;height:27px;line-height:27px;"><span style="color:#333333">5.31</span></div>
<div style="left:777px;top:722px;width:36px;height:27px;background:#f0f0f0;"></div>
<div class="t" style="left:777px;top:724px;width:36px;height:27px;line-height:27px;"><span style="color:#008000"><span class="k">负</span></span></div>
<div style="left:814px;top:722px;width:37px;height:27px;background:#f0f0f0;"></div>
<div class="t" style="left:814px;top:724px;width:37px;height:27px;line-height:27px;"><span style="color:#008000"><span class="k">输</span></span></div>
<div style="left:852px;top:722px;width:53px;height:27px;background:#f0f0f0;"></div>
<div class="t" style="left:852px;top:724px;width:53px;height:27px;line-height:27px;"><span style="color:#ff0000"><span class="k">大</span></span></div>
<div style="left:0px;top:749px;width:905px;height:1px;background:#bcbcbc;"></div>
<div style="left:70px;top:722px;width:1px;height:27px;background:#bcbcbc;"></div>
<div style="left:142px;top:722px;width:1px;height:27px;background:#bcbcbc;"></div>
<div style="left:244px;top:722px;width:1px;height:27px;background:#bcbcbc;"></div>
<div style="left:329px;top:722px;width:1px;height:27px;background:#bcbcbc;"></div>
<div style="left:367px;top:722px;width:1px;height:27px;background:#bcbcbc;"></div>
<div style="left:439px;top:722px;width:1px;height:27px;background:#bcbcbc;"></div>
<div style="left:476px;top:722px;width:1px;height:27px;background:#bcbcbc;"></div>
<div style="left:554px;top:722px;width:1px;height:27px;background:#bcbcbc;"></div>
<div style="left:591px;top:722px;width:1px;height:27px;background:#bcbcbc;"></div>
<div style="left:644px;top:722px;width:1px;height:27px;background:#bcbcbc;"></div>
<div style="left:710px;top:722px;width:1px;height:27px;background:#bcbcbc;"></div>
<div style="left:776px;top:722px;width:1px;height:27px;background:#bcbcbc;"></div>
<div style="left:813px;top:722px;width:1px;height:27px;background:#bcbcbc;"></div>
<div style="left:851px;top:722px;width:1px;height:27px;background:#bcbcbc;"></div>
<div style="left:0px;top:750px;width:905px;height:27px;background:#ffffff;"></div>
<div class="sm" style="left:285px;top:759px"><span style="color:#333333"><span class="k">近</span></span><span style="color:#ff0000">10</span><span style="color:#333333"><span class="k">场</span>,<span class="k">胜</span>2<span class="k">平</span>0<span class="k">负</span>8,</span></div>
<div class="sm" style="left:389px;top:759px"><span style="color:#333333"><span class="k">胜率</span>:</span></div>
<div class="gb" style="left:417px;top:754px;width:35px"><span style="position:relative;top:1px">20%</span></div>
<div class="sm" style="left:456px;top:759px"><span style="color:#333333"><span class="k">赢率</span>:</span></div>
<div class="gb" style="left:484px;top:754px;width:35px"><span style="position:relative;top:1px">30%</span></div>
<div class="sm" style="left:522px;top:759px"><span style="color:#333333"><span class="k">大</span>:</span><span style="color:#0000ff">50%</span></div>
<div class="sm" style="left:567px;top:759px"><span style="color:#333333"><span class="k">单率</span>:</span><span style="color:#ff0000">80%</span></div>
<div style="left:0px;top:777px;width:905px;height:1px;background:#bcbcbc;"></div>
<div style="left:0px;top:778px;width:905px;height:20px;background:#1b95d6;"></div>
<div class="tt" style="left:376px;top:780px;height:27px;line-height:27px">相同盘路</div>
<input type="radio" class="r" name="b" style="left:431px;top:784px">
<div class="tw" style="left:449px;top:781px;height:27px;line-height:27px">双计</div>
<input type="radio" class="r" name="b" checked style="left:477px;top:784px">
<div class="tw" style="left:493px;top:781px;height:27px;line-height:27px">进球数</div>
</body></html>
